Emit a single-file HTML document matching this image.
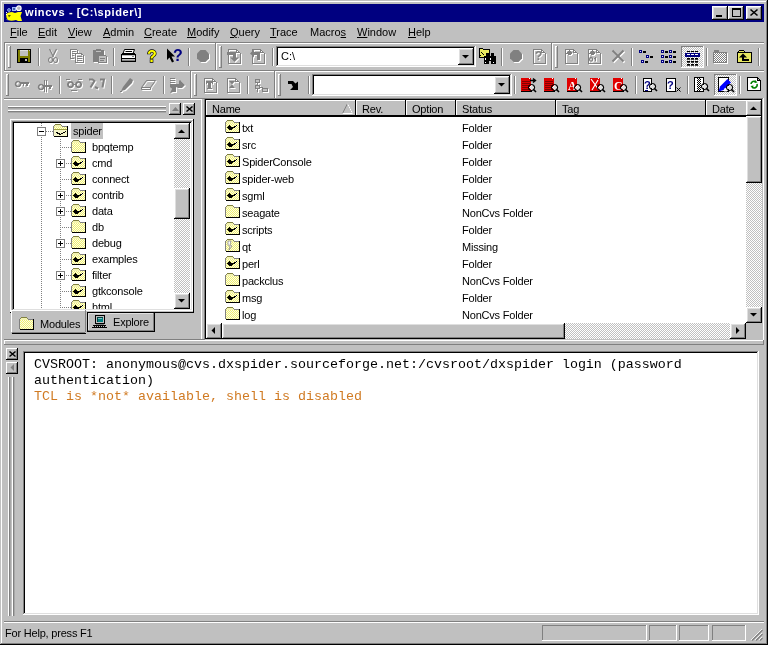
<!DOCTYPE html><html><head><meta charset="utf-8"><style>
html,body{margin:0;padding:0;width:768px;height:645px;overflow:hidden;background:#c0c0c0;}
body{position:relative;will-change:transform;font-family:"Liberation Sans",sans-serif;font-size:11px;}
svg{overflow:visible}
.u{text-decoration:underline;}
</style></head><body>
<svg width="0" height="0" style="position:absolute"><defs><pattern id="dy" width="2" height="2" patternUnits="userSpaceOnUse"><rect width="2" height="2" fill="#fcfce8"/><rect width="1" height="1" fill="#f0f070"/><rect x="1" y="1" width="1" height="1" fill="#f0f070"/></pattern></defs></svg>
<div style="position:absolute;left:0px;top:0px;width:768px;height:645px;background:#000;"></div>
<div style="position:absolute;left:0px;top:0px;width:767px;height:644px;background:#c0c0c0;"></div>
<div style="position:absolute;left:1px;top:1px;width:766px;height:643px;background:#808080;"></div>
<div style="position:absolute;left:1px;top:1px;width:765px;height:642px;background:#fff;"></div>
<div style="position:absolute;left:2px;top:2px;width:764px;height:641px;background:#c0c0c0;"></div>
<div style="position:absolute;left:4px;top:4px;width:760px;height:18px;background:#000080;"></div>
<svg style="position:absolute;left:5px;top:5px" width="18" height="17" viewBox="0 0 18 17" shape-rendering="crispEdges"><g shape-rendering="geometricPrecision"><path d="M1 9 Q3 7 7 7 L10 8 L13 7 H17 L15.5 11 L17 16 H13 L11 15 Q6 16.5 3 15 Q1 13 1 9 Z" fill="#ffff00"/><path d="M1.5 7 V11 M2 14.5 L3 15.5" stroke="#fff" stroke-width="1" stroke-dasharray="1 1"/><path d="M3 10 H6 L4 12.5 Z" fill="#606000"/><circle cx="13.8" cy="3.2" r="2.3" fill="#b8b8c0" stroke="#fff" stroke-width="1.2"/><rect x="7.5" y="2.5" width="3" height="3" fill="#4060a0" stroke="#a0b8ff" stroke-width="1"/><circle cx="4" cy="5" r="1.4" fill="#3050a0" stroke="#a0b8ff" stroke-width="0.9"/></g></svg>
<div style="position:absolute;left:25px;top:6px;font-size:11px;line-height:13px;color:#fff;white-space:pre;font-weight:bold;letter-spacing:0.6px;">wincvs - [C:\spider\]</div>
<div style="position:absolute;left:712px;top:6px;width:16px;height:14px;background:#000;"></div>
<div style="position:absolute;left:712px;top:6px;width:15px;height:13px;background:#fff;"></div>
<div style="position:absolute;left:713px;top:7px;width:14px;height:12px;background:#808080;"></div>
<div style="position:absolute;left:713px;top:7px;width:13px;height:11px;background:#dfdfdf;"></div>
<div style="position:absolute;left:714px;top:8px;width:12px;height:10px;background:#c0c0c0;"></div>
<div style="position:absolute;left:728px;top:6px;width:16px;height:14px;background:#000;"></div>
<div style="position:absolute;left:728px;top:6px;width:15px;height:13px;background:#fff;"></div>
<div style="position:absolute;left:729px;top:7px;width:14px;height:12px;background:#808080;"></div>
<div style="position:absolute;left:729px;top:7px;width:13px;height:11px;background:#dfdfdf;"></div>
<div style="position:absolute;left:730px;top:8px;width:12px;height:10px;background:#c0c0c0;"></div>
<div style="position:absolute;left:746px;top:6px;width:16px;height:14px;background:#000;"></div>
<div style="position:absolute;left:746px;top:6px;width:15px;height:13px;background:#fff;"></div>
<div style="position:absolute;left:747px;top:7px;width:14px;height:12px;background:#808080;"></div>
<div style="position:absolute;left:747px;top:7px;width:13px;height:11px;background:#dfdfdf;"></div>
<div style="position:absolute;left:748px;top:8px;width:12px;height:10px;background:#c0c0c0;"></div>
<div style="position:absolute;left:716px;top:15px;width:6px;height:2px;background:#000;"></div>
<div style="position:absolute;left:732px;top:8px;width:9px;height:9px;background:#000;"></div>
<div style="position:absolute;left:733px;top:10px;width:7px;height:6px;background:#c0c0c0;"></div>
<svg style="position:absolute;left:750px;top:9px" width="8" height="7"><path d="M0.5 0.5 L7.5 6.5 M7.5 0.5 L0.5 6.5" stroke="#000" stroke-width="1.6"/></svg>
<div style="position:absolute;left:10px;top:26px;font-size:11px;line-height:13px;color:#000;white-space:pre;"><span class="u">F</span>ile</div>
<div style="position:absolute;left:38px;top:26px;font-size:11px;line-height:13px;color:#000;white-space:pre;"><span class="u">E</span>dit</div>
<div style="position:absolute;left:68px;top:26px;font-size:11px;line-height:13px;color:#000;white-space:pre;"><span class="u">V</span>iew</div>
<div style="position:absolute;left:103px;top:26px;font-size:11px;line-height:13px;color:#000;white-space:pre;"><span class="u">A</span>dmin</div>
<div style="position:absolute;left:144px;top:26px;font-size:11px;line-height:13px;color:#000;white-space:pre;"><span class="u">C</span>reate</div>
<div style="position:absolute;left:187px;top:26px;font-size:11px;line-height:13px;color:#000;white-space:pre;"><span class="u">M</span>odify</div>
<div style="position:absolute;left:230px;top:26px;font-size:11px;line-height:13px;color:#000;white-space:pre;"><span class="u">Q</span>uery</div>
<div style="position:absolute;left:270px;top:26px;font-size:11px;line-height:13px;color:#000;white-space:pre;"><span class="u">T</span>race</div>
<div style="position:absolute;left:310px;top:26px;font-size:11px;line-height:13px;color:#000;white-space:pre;">Macro<span class="u">s</span></div>
<div style="position:absolute;left:357px;top:26px;font-size:11px;line-height:13px;color:#000;white-space:pre;"><span class="u">W</span>indow</div>
<div style="position:absolute;left:408px;top:26px;font-size:11px;line-height:13px;color:#000;white-space:pre;"><span class="u">H</span>elp</div>
<div style="position:absolute;left:4px;top:42px;width:760px;height:1px;background:#808080;"></div>
<div style="position:absolute;left:4px;top:43px;width:760px;height:1px;background:#fff;"></div>
<div style="position:absolute;left:4px;top:70px;width:760px;height:1px;background:#808080;"></div>
<div style="position:absolute;left:4px;top:71px;width:760px;height:1px;background:#fff;"></div>
<div style="position:absolute;left:4px;top:98px;width:760px;height:1px;background:#808080;"></div>
<div style="position:absolute;left:215px;top:43px;width:1px;height:27px;background:#808080;"></div>
<div style="position:absolute;left:216px;top:43px;width:1px;height:27px;background:#fff;"></div>
<div style="position:absolute;left:551px;top:43px;width:1px;height:27px;background:#808080;"></div>
<div style="position:absolute;left:552px;top:43px;width:1px;height:27px;background:#fff;"></div>
<div style="position:absolute;left:4px;top:43px;width:1px;height:27px;background:#808080;"></div>
<div style="position:absolute;left:5px;top:43px;width:1px;height:27px;background:#fff;"></div>
<div style="position:absolute;left:190px;top:71px;width:1px;height:27px;background:#808080;"></div>
<div style="position:absolute;left:191px;top:71px;width:1px;height:27px;background:#fff;"></div>
<div style="position:absolute;left:274px;top:71px;width:1px;height:27px;background:#808080;"></div>
<div style="position:absolute;left:275px;top:71px;width:1px;height:27px;background:#fff;"></div>
<div style="position:absolute;left:8px;top:46px;width:3px;height:22px;background:#808080;"></div>
<div style="position:absolute;left:8px;top:46px;width:2px;height:21px;background:#fff;"></div>
<div style="position:absolute;left:9px;top:47px;width:1px;height:20px;background:#c0c0c0;"></div>
<div style="position:absolute;left:219px;top:46px;width:3px;height:22px;background:#808080;"></div>
<div style="position:absolute;left:219px;top:46px;width:2px;height:21px;background:#fff;"></div>
<div style="position:absolute;left:220px;top:47px;width:1px;height:20px;background:#c0c0c0;"></div>
<div style="position:absolute;left:555px;top:46px;width:3px;height:22px;background:#808080;"></div>
<div style="position:absolute;left:555px;top:46px;width:2px;height:21px;background:#fff;"></div>
<div style="position:absolute;left:556px;top:47px;width:1px;height:20px;background:#c0c0c0;"></div>
<div style="position:absolute;left:6px;top:74px;width:3px;height:22px;background:#808080;"></div>
<div style="position:absolute;left:6px;top:74px;width:2px;height:21px;background:#fff;"></div>
<div style="position:absolute;left:7px;top:75px;width:1px;height:20px;background:#c0c0c0;"></div>
<div style="position:absolute;left:194px;top:74px;width:3px;height:22px;background:#808080;"></div>
<div style="position:absolute;left:194px;top:74px;width:2px;height:21px;background:#fff;"></div>
<div style="position:absolute;left:195px;top:75px;width:1px;height:20px;background:#c0c0c0;"></div>
<div style="position:absolute;left:278px;top:74px;width:3px;height:22px;background:#808080;"></div>
<div style="position:absolute;left:278px;top:74px;width:2px;height:21px;background:#fff;"></div>
<div style="position:absolute;left:279px;top:75px;width:1px;height:20px;background:#c0c0c0;"></div>
<div style="position:absolute;left:38px;top:48px;width:1px;height:18px;background:#808080;"></div>
<div style="position:absolute;left:39px;top:48px;width:1px;height:18px;background:#fff;"></div>
<div style="position:absolute;left:113px;top:48px;width:1px;height:18px;background:#808080;"></div>
<div style="position:absolute;left:114px;top:48px;width:1px;height:18px;background:#fff;"></div>
<div style="position:absolute;left:188px;top:48px;width:1px;height:18px;background:#808080;"></div>
<div style="position:absolute;left:189px;top:48px;width:1px;height:18px;background:#fff;"></div>
<div style="position:absolute;left:501px;top:48px;width:1px;height:18px;background:#808080;"></div>
<div style="position:absolute;left:502px;top:48px;width:1px;height:18px;background:#fff;"></div>
<div style="position:absolute;left:631px;top:48px;width:1px;height:18px;background:#808080;"></div>
<div style="position:absolute;left:632px;top:48px;width:1px;height:18px;background:#fff;"></div>
<div style="position:absolute;left:706px;top:48px;width:1px;height:18px;background:#808080;"></div>
<div style="position:absolute;left:707px;top:48px;width:1px;height:18px;background:#fff;"></div>
<div style="position:absolute;left:758px;top:48px;width:1px;height:18px;background:#808080;"></div>
<div style="position:absolute;left:759px;top:48px;width:1px;height:18px;background:#fff;"></div>
<div style="position:absolute;left:59px;top:76px;width:1px;height:18px;background:#808080;"></div>
<div style="position:absolute;left:60px;top:76px;width:1px;height:18px;background:#fff;"></div>
<div style="position:absolute;left:111px;top:76px;width:1px;height:18px;background:#808080;"></div>
<div style="position:absolute;left:112px;top:76px;width:1px;height:18px;background:#fff;"></div>
<div style="position:absolute;left:163px;top:76px;width:1px;height:18px;background:#808080;"></div>
<div style="position:absolute;left:164px;top:76px;width:1px;height:18px;background:#fff;"></div>
<div style="position:absolute;left:247px;top:76px;width:1px;height:18px;background:#808080;"></div>
<div style="position:absolute;left:248px;top:76px;width:1px;height:18px;background:#fff;"></div>
<div style="position:absolute;left:308px;top:76px;width:1px;height:18px;background:#808080;"></div>
<div style="position:absolute;left:309px;top:76px;width:1px;height:18px;background:#fff;"></div>
<div style="position:absolute;left:514px;top:76px;width:1px;height:18px;background:#808080;"></div>
<div style="position:absolute;left:515px;top:76px;width:1px;height:18px;background:#fff;"></div>
<div style="position:absolute;left:635px;top:76px;width:1px;height:18px;background:#808080;"></div>
<div style="position:absolute;left:636px;top:76px;width:1px;height:18px;background:#fff;"></div>
<div style="position:absolute;left:687px;top:76px;width:1px;height:18px;background:#808080;"></div>
<div style="position:absolute;left:688px;top:76px;width:1px;height:18px;background:#fff;"></div>
<div style="position:absolute;left:739px;top:76px;width:1px;height:18px;background:#808080;"></div>
<div style="position:absolute;left:740px;top:76px;width:1px;height:18px;background:#fff;"></div>
<div style="position:absolute;left:272px;top:48px;width:1px;height:18px;background:#808080;"></div>
<div style="position:absolute;left:273px;top:48px;width:1px;height:18px;background:#fff;"></div>
<div style="position:absolute;left:276px;top:46px;width:200px;height:21px;background:#fff;"></div>
<div style="position:absolute;left:276px;top:46px;width:199px;height:20px;background:#808080;"></div>
<div style="position:absolute;left:277px;top:47px;width:198px;height:19px;background:#dfdfdf;"></div>
<div style="position:absolute;left:277px;top:47px;width:197px;height:18px;background:#000;"></div>
<div style="position:absolute;left:278px;top:48px;width:196px;height:17px;background:#fff;"></div>
<div style="position:absolute;left:281px;top:50px;font-size:11px;line-height:13px;color:#000;white-space:pre;">C:\</div>
<div style="position:absolute;left:458px;top:48px;width:16px;height:17px;background:#000;"></div>
<div style="position:absolute;left:458px;top:48px;width:15px;height:16px;background:#fff;"></div>
<div style="position:absolute;left:459px;top:49px;width:14px;height:15px;background:#808080;"></div>
<div style="position:absolute;left:459px;top:49px;width:13px;height:14px;background:#dfdfdf;"></div>
<div style="position:absolute;left:460px;top:50px;width:12px;height:13px;background:#c0c0c0;"></div>
<svg style="position:absolute;left:462px;top:55px" width="8" height="4"><path d="M0 0 H7 L3.5 3.5 Z" fill="#000"/></svg>
<div style="position:absolute;left:312px;top:74px;width:200px;height:22px;background:#fff;"></div>
<div style="position:absolute;left:312px;top:74px;width:199px;height:21px;background:#808080;"></div>
<div style="position:absolute;left:313px;top:75px;width:198px;height:20px;background:#dfdfdf;"></div>
<div style="position:absolute;left:313px;top:75px;width:197px;height:19px;background:#000;"></div>
<div style="position:absolute;left:314px;top:76px;width:196px;height:18px;background:#fff;"></div>
<div style="position:absolute;left:494px;top:76px;width:16px;height:18px;background:#000;"></div>
<div style="position:absolute;left:494px;top:76px;width:15px;height:17px;background:#fff;"></div>
<div style="position:absolute;left:495px;top:77px;width:14px;height:16px;background:#808080;"></div>
<div style="position:absolute;left:495px;top:77px;width:13px;height:15px;background:#dfdfdf;"></div>
<div style="position:absolute;left:496px;top:78px;width:12px;height:14px;background:#c0c0c0;"></div>
<svg style="position:absolute;left:498px;top:83px" width="8" height="4"><path d="M0 0 H7 L3.5 3.5 Z" fill="#000"/></svg>
<div style="position:absolute;left:681px;top:46px;width:23px;height:22px;background:#fff;"></div>
<div style="position:absolute;left:681px;top:46px;width:22px;height:21px;background:#808080;"></div>
<div style="position:absolute;left:682px;top:47px;width:21px;height:20px;background:repeating-conic-gradient(#fff 0 25%,#c0c0c0 0 50%) 0 0/2px 2px;"></div>
<div style="position:absolute;left:714px;top:74px;width:23px;height:22px;background:#fff;"></div>
<div style="position:absolute;left:714px;top:74px;width:22px;height:21px;background:#808080;"></div>
<div style="position:absolute;left:715px;top:75px;width:21px;height:20px;background:repeating-conic-gradient(#fff 0 25%,#c0c0c0 0 50%) 0 0/2px 2px;"></div>
<svg style="position:absolute;left:16px;top:48px" width="16" height="16" viewBox="0 0 16 16" shape-rendering="crispEdges"><rect x="1" y="1" width="14" height="14" fill="#000"/><rect x="2" y="2" width="12" height="12" fill="#808000"/><rect x="4" y="2" width="8" height="6" fill="#c0c0c0"/><rect x="4" y="2" width="8" height="1" fill="#e0e0e0"/><rect x="3" y="9" width="10" height="1" fill="#808000"/><rect x="4" y="10" width="8" height="4" fill="#000"/><rect x="9" y="11" width="2" height="2" fill="#c0c0c0"/><rect x="13" y="2" width="1" height="1" fill="#c0c0c0"/></svg>
<svg style="position:absolute;left:46px;top:48px" width="16" height="16" viewBox="0 0 16 16" shape-rendering="crispEdges"><g transform="translate(1,1)" style="filter:none"><path d="M3.5 1 L7.5 9 M10.5 1 L6.5 9" fill="none" stroke="#fff" stroke-width="1.2" shape-rendering="geometricPrecision"/><path d="M4.5 9.5 a2 2.5 0 1 0 0.1 0 M9.5 9.5 a2 2.5 0 1 0 0.1 0" fill="none" stroke="#fff" stroke-width="1.1" shape-rendering="geometricPrecision"/></g><path d="M3.5 1 L7.5 9 M10.5 1 L6.5 9" fill="none" stroke="#808080" stroke-width="1.2" shape-rendering="geometricPrecision"/><path d="M4.5 9.5 a2 2.5 0 1 0 0.1 0 M9.5 9.5 a2 2.5 0 1 0 0.1 0" fill="none" stroke="#808080" stroke-width="1.1" shape-rendering="geometricPrecision"/></svg>
<svg style="position:absolute;left:69px;top:48px" width="16" height="16" viewBox="0 0 16 16" shape-rendering="crispEdges"><g transform="translate(1,1)" style="filter:none"><rect x="1" y="1" width="7" height="1" fill="#fff"/><rect x="1" y="1" width="1" height="9" fill="#fff"/><rect x="1" y="10" width="4" height="1" fill="#fff"/><rect x="8" y="2" width="1" height="3" fill="#fff"/><rect x="3" y="3" width="4" height="1" fill="#fff"/><rect x="3" y="5" width="4" height="1" fill="#fff"/><rect x="3" y="7" width="2" height="1" fill="#fff"/><rect x="6" y="5" width="6" height="1" fill="#fff"/><rect x="6" y="5" width="1" height="10" fill="#fff"/><rect x="6" y="14" width="9" height="1" fill="#fff"/><rect x="14" y="7" width="1" height="8" fill="#fff"/><rect x="12" y="5" width="1" height="2" fill="#fff"/><rect x="13" y="6" width="1" height="1" fill="#fff"/><rect x="8" y="8" width="5" height="1" fill="#fff"/><rect x="8" y="10" width="5" height="1" fill="#fff"/><rect x="8" y="12" width="5" height="1" fill="#fff"/></g><rect x="1" y="1" width="7" height="1" fill="#808080"/><rect x="1" y="1" width="1" height="9" fill="#808080"/><rect x="1" y="10" width="4" height="1" fill="#808080"/><rect x="8" y="2" width="1" height="3" fill="#808080"/><rect x="3" y="3" width="4" height="1" fill="#808080"/><rect x="3" y="5" width="4" height="1" fill="#808080"/><rect x="3" y="7" width="2" height="1" fill="#808080"/><rect x="6" y="5" width="6" height="1" fill="#808080"/><rect x="6" y="5" width="1" height="10" fill="#808080"/><rect x="6" y="14" width="9" height="1" fill="#808080"/><rect x="14" y="7" width="1" height="8" fill="#808080"/><rect x="12" y="5" width="1" height="2" fill="#808080"/><rect x="13" y="6" width="1" height="1" fill="#808080"/><rect x="8" y="8" width="5" height="1" fill="#808080"/><rect x="8" y="10" width="5" height="1" fill="#808080"/><rect x="8" y="12" width="5" height="1" fill="#808080"/></svg>
<svg style="position:absolute;left:92px;top:48px" width="16" height="16" viewBox="0 0 16 16" shape-rendering="crispEdges"><g transform="translate(1,1)" style="filter:none"><rect x="1" y="2" width="11" height="12" fill="#fff"/><rect x="4" y="1" width="5" height="2" fill="#fff"/><rect x="4" y="3" width="5" height="1" fill="#c0c0c0"/><rect x="6" y="7" width="8" height="1" fill="#fff"/><rect x="6" y="7" width="1" height="8" fill="#fff"/><rect x="6" y="14" width="9" height="1" fill="#fff"/><rect x="14" y="8" width="1" height="7" fill="#fff"/><rect x="7" y="8" width="7" height="6" fill="#c0c0c0"/><rect x="8" y="10" width="5" height="1" fill="#fff"/><rect x="8" y="12" width="4" height="1" fill="#fff"/></g><rect x="1" y="2" width="11" height="12" fill="#808080"/><rect x="4" y="1" width="5" height="2" fill="#808080"/><rect x="4" y="3" width="5" height="1" fill="#c0c0c0"/><rect x="6" y="7" width="8" height="1" fill="#808080"/><rect x="6" y="7" width="1" height="8" fill="#808080"/><rect x="6" y="14" width="9" height="1" fill="#808080"/><rect x="14" y="8" width="1" height="7" fill="#808080"/><rect x="7" y="8" width="7" height="6" fill="#c0c0c0"/><rect x="8" y="10" width="5" height="1" fill="#808080"/><rect x="8" y="12" width="4" height="1" fill="#808080"/></svg>
<svg style="position:absolute;left:120px;top:48px" width="16" height="16" viewBox="0 0 16 16" shape-rendering="crispEdges"><path d="M4.5 1.5 H14.5 L13 5.5 H3 Z" fill="#fff" shape-rendering="geometricPrecision"/><path d="M4.5 1.5 H14.5 L13 5.5 H3 Z" fill="none" stroke="#000" stroke-width="1" shape-rendering="geometricPrecision"/><path d="M5.5 3.5 H12" fill="none" stroke="#000" stroke-width="1" shape-rendering="geometricPrecision"/><rect x="1" y="6" width="15" height="8" fill="#000"/><rect x="2" y="5" width="13" height="1" fill="#000"/><rect x="2" y="7" width="13" height="1" fill="#c0c0c0"/><rect x="2" y="8" width="13" height="2" fill="#fff"/><rect x="3" y="10" width="11" height="1" fill="#000"/><rect x="2" y="11" width="13" height="1" fill="#c0c0c0"/><rect x="2" y="12" width="13" height="1" fill="#808080"/><rect x="12" y="8" width="2" height="1" fill="#808080"/></svg>
<svg style="position:absolute;left:144px;top:48px" width="16" height="16" viewBox="0 0 16 16" shape-rendering="crispEdges"><text x="3" y="14" font-family="Liberation Sans" font-weight="bold" font-size="16" fill="#ffff00" stroke="#000" stroke-width="1.3" paint-order="stroke" shape-rendering="geometricPrecision">?</text></svg>
<svg style="position:absolute;left:166px;top:48px" width="18" height="16" viewBox="0 0 18 16" shape-rendering="crispEdges"><path d="M1 0.5 L1 12 L3.5 9.5 L6 14.5 L8 13.5 L5.5 8.5 L9 8.5 Z" fill="#000" shape-rendering="geometricPrecision"/><text x="7" y="13" font-family="Liberation Sans" font-weight="bold" font-size="16" fill="#000080"  shape-rendering="geometricPrecision">?</text></svg>
<svg style="position:absolute;left:196px;top:49px" width="16" height="16" viewBox="0 0 16 16" shape-rendering="crispEdges"><path d="M5.5 2 H10.5 L14 5.5 V10.5 L10.5 14 H5.5 L2 10.5 V5.5 Z" fill="#fff" shape-rendering="geometricPrecision"/><path d="M4.5 1 H9.5 L13 4.5 V9.5 L9.5 13 H4.5 L1 9.5 V4.5 Z" fill="#808080" shape-rendering="geometricPrecision"/></svg>
<svg style="position:absolute;left:226px;top:48px" width="16" height="16" viewBox="0 0 16 16" shape-rendering="crispEdges"><g transform="translate(1,1)" style="filter:none"><rect x="2" y="1" width="9" height="1" fill="#fff"/><rect x="2" y="1" width="1" height="15" fill="#fff"/><rect x="2" y="15" width="13" height="1" fill="#fff"/><rect x="14" y="5" width="1" height="11" fill="#fff"/><rect x="10" y="1" width="1" height="4" fill="#fff"/><rect x="10" y="4" width="4" height="1" fill="#fff"/><rect x="11" y="2" width="1" height="1" fill="#fff"/><rect x="12" y="3" width="1" height="1" fill="#fff"/><rect x="13" y="4" width="1" height="1" fill="#fff"/><rect x="1" y="4" width="9" height="3" fill="#fff"/><rect x="7" y="4" width="3" height="6" fill="#fff"/><path d="M4 9.5 H13 L8.5 14 Z" fill="#fff" shape-rendering="geometricPrecision"/></g><rect x="2" y="1" width="9" height="1" fill="#808080"/><rect x="2" y="1" width="1" height="15" fill="#808080"/><rect x="2" y="15" width="13" height="1" fill="#808080"/><rect x="14" y="5" width="1" height="11" fill="#808080"/><rect x="10" y="1" width="1" height="4" fill="#808080"/><rect x="10" y="4" width="4" height="1" fill="#808080"/><rect x="11" y="2" width="1" height="1" fill="#808080"/><rect x="12" y="3" width="1" height="1" fill="#808080"/><rect x="13" y="4" width="1" height="1" fill="#808080"/><rect x="1" y="4" width="9" height="3" fill="#808080"/><rect x="7" y="4" width="3" height="6" fill="#808080"/><path d="M4 9.5 H13 L8.5 14 Z" fill="#808080" shape-rendering="geometricPrecision"/></svg>
<svg style="position:absolute;left:250px;top:48px" width="16" height="16" viewBox="0 0 16 16" shape-rendering="crispEdges"><g transform="translate(1,1)" style="filter:none"><rect x="2" y="1" width="9" height="1" fill="#fff"/><rect x="2" y="1" width="1" height="15" fill="#fff"/><rect x="2" y="15" width="13" height="1" fill="#fff"/><rect x="14" y="5" width="1" height="11" fill="#fff"/><rect x="10" y="1" width="1" height="4" fill="#fff"/><rect x="10" y="4" width="4" height="1" fill="#fff"/><rect x="11" y="2" width="1" height="1" fill="#fff"/><rect x="12" y="3" width="1" height="1" fill="#fff"/><rect x="13" y="4" width="1" height="1" fill="#fff"/><rect x="3" y="4" width="7" height="3" fill="#fff"/><rect x="7" y="4" width="3" height="8" fill="#fff"/><path d="M0 5.5 L4 1.5 V9.5 Z" fill="#fff" shape-rendering="geometricPrecision"/></g><rect x="2" y="1" width="9" height="1" fill="#808080"/><rect x="2" y="1" width="1" height="15" fill="#808080"/><rect x="2" y="15" width="13" height="1" fill="#808080"/><rect x="14" y="5" width="1" height="11" fill="#808080"/><rect x="10" y="1" width="1" height="4" fill="#808080"/><rect x="10" y="4" width="4" height="1" fill="#808080"/><rect x="11" y="2" width="1" height="1" fill="#808080"/><rect x="12" y="3" width="1" height="1" fill="#808080"/><rect x="13" y="4" width="1" height="1" fill="#808080"/><rect x="3" y="4" width="7" height="3" fill="#808080"/><rect x="7" y="4" width="3" height="8" fill="#808080"/><path d="M0 5.5 L4 1.5 V9.5 Z" fill="#808080" shape-rendering="geometricPrecision"/></svg>
<svg style="position:absolute;left:479px;top:48px" width="17" height="16" viewBox="0 0 17 16" shape-rendering="crispEdges"><rect x="0" y="1" width="11" height="9" fill="#000"/><rect x="0" y="0" width="4" height="1" fill="#000"/><rect x="1" y="2" width="9" height="7" fill="#e8e860"/><rect x="1" y="1" width="3" height="1" fill="#e8e860"/><rect x="2" y="4" width="1" height="1" fill="#000"/><rect x="3" y="5" width="1" height="1" fill="#000"/><rect x="4" y="6" width="1" height="1" fill="#000"/><rect x="1" y="7" width="1" height="1" fill="#000"/><rect x="7" y="5" width="3" height="4" fill="#000"/><rect x="12" y="5" width="3" height="4" fill="#000"/><rect x="5" y="8" width="12" height="8" fill="#000"/><rect x="10" y="13" width="2" height="3" fill="#c0c0c0"/><rect x="6" y="10" width="1" height="2" fill="#fff"/><rect x="11" y="10" width="1" height="2" fill="#fff"/><rect x="6" y="14" width="1" height="1" fill="#fff"/><rect x="14" y="14" width="1" height="1" fill="#fff"/></svg>
<svg style="position:absolute;left:509px;top:49px" width="16" height="16" viewBox="0 0 16 16" shape-rendering="crispEdges"><path d="M5.5 2 H10.5 L14 5.5 V10.5 L10.5 14 H5.5 L2 10.5 V5.5 Z" fill="#fff" shape-rendering="geometricPrecision"/><path d="M4.5 1 H9.5 L13 4.5 V9.5 L9.5 13 H4.5 L1 9.5 V4.5 Z" fill="#808080" shape-rendering="geometricPrecision"/></svg>
<svg style="position:absolute;left:531px;top:48px" width="16" height="16" viewBox="0 0 16 16" shape-rendering="crispEdges"><g transform="translate(1,1)" style="filter:none"><rect x="2" y="1" width="9" height="1" fill="#fff"/><rect x="2" y="1" width="1" height="15" fill="#fff"/><rect x="2" y="15" width="13" height="1" fill="#fff"/><rect x="14" y="5" width="1" height="11" fill="#fff"/><rect x="10" y="1" width="1" height="4" fill="#fff"/><rect x="10" y="4" width="4" height="1" fill="#fff"/><rect x="11" y="2" width="1" height="1" fill="#fff"/><rect x="12" y="3" width="1" height="1" fill="#fff"/><rect x="13" y="4" width="1" height="1" fill="#fff"/><text x="4" y="12" font-family="Liberation Sans" font-weight="bold" font-size="12" fill="#fff"  shape-rendering="geometricPrecision">?</text></g><rect x="2" y="1" width="9" height="1" fill="#808080"/><rect x="2" y="1" width="1" height="15" fill="#808080"/><rect x="2" y="15" width="13" height="1" fill="#808080"/><rect x="14" y="5" width="1" height="11" fill="#808080"/><rect x="10" y="1" width="1" height="4" fill="#808080"/><rect x="10" y="4" width="4" height="1" fill="#808080"/><rect x="11" y="2" width="1" height="1" fill="#808080"/><rect x="12" y="3" width="1" height="1" fill="#808080"/><rect x="13" y="4" width="1" height="1" fill="#808080"/><text x="4" y="12" font-family="Liberation Sans" font-weight="bold" font-size="12" fill="#808080"  shape-rendering="geometricPrecision">?</text></svg>
<svg style="position:absolute;left:563px;top:48px" width="16" height="16" viewBox="0 0 16 16" shape-rendering="crispEdges"><g transform="translate(1,1)" style="filter:none"><rect x="2" y="1" width="9" height="1" fill="#fff"/><rect x="2" y="1" width="1" height="15" fill="#fff"/><rect x="2" y="15" width="13" height="1" fill="#fff"/><rect x="14" y="5" width="1" height="11" fill="#fff"/><rect x="10" y="1" width="1" height="4" fill="#fff"/><rect x="10" y="4" width="4" height="1" fill="#fff"/><rect x="11" y="2" width="1" height="1" fill="#fff"/><rect x="12" y="3" width="1" height="1" fill="#fff"/><rect x="13" y="4" width="1" height="1" fill="#fff"/><rect x="4" y="4" width="5" height="2" fill="#fff"/><rect x="5" y="3" width="3" height="4" fill="#fff"/><rect x="6" y="2" width="1" height="1" fill="#fff"/><rect x="3" y="5" width="1" height="1" fill="#fff"/></g><rect x="2" y="1" width="9" height="1" fill="#808080"/><rect x="2" y="1" width="1" height="15" fill="#808080"/><rect x="2" y="15" width="13" height="1" fill="#808080"/><rect x="14" y="5" width="1" height="11" fill="#808080"/><rect x="10" y="1" width="1" height="4" fill="#808080"/><rect x="10" y="4" width="4" height="1" fill="#808080"/><rect x="11" y="2" width="1" height="1" fill="#808080"/><rect x="12" y="3" width="1" height="1" fill="#808080"/><rect x="13" y="4" width="1" height="1" fill="#808080"/><rect x="4" y="4" width="5" height="2" fill="#808080"/><rect x="5" y="3" width="3" height="4" fill="#808080"/><rect x="6" y="2" width="1" height="1" fill="#808080"/><rect x="3" y="5" width="1" height="1" fill="#808080"/></svg>
<svg style="position:absolute;left:586px;top:48px" width="16" height="16" viewBox="0 0 16 16" shape-rendering="crispEdges"><g transform="translate(1,1)" style="filter:none"><rect x="2" y="1" width="9" height="1" fill="#fff"/><rect x="2" y="1" width="1" height="15" fill="#fff"/><rect x="2" y="15" width="13" height="1" fill="#fff"/><rect x="14" y="5" width="1" height="11" fill="#fff"/><rect x="10" y="1" width="1" height="4" fill="#fff"/><rect x="10" y="4" width="4" height="1" fill="#fff"/><rect x="11" y="2" width="1" height="1" fill="#fff"/><rect x="12" y="3" width="1" height="1" fill="#fff"/><rect x="13" y="4" width="1" height="1" fill="#fff"/><rect x="4" y="4" width="5" height="2" fill="#fff"/><rect x="5" y="3" width="3" height="4" fill="#fff"/><rect x="6" y="2" width="1" height="1" fill="#fff"/><rect x="3" y="5" width="1" height="1" fill="#fff"/><path d="M5 9.5 a1.5 1.8 0 1 0 0.1 0" fill="none" stroke="#fff" stroke-width="1.3" shape-rendering="geometricPrecision"/><rect x="9" y="9" width="1" height="4" fill="#fff"/><rect x="8" y="10" width="1" height="1" fill="#fff"/></g><rect x="2" y="1" width="9" height="1" fill="#808080"/><rect x="2" y="1" width="1" height="15" fill="#808080"/><rect x="2" y="15" width="13" height="1" fill="#808080"/><rect x="14" y="5" width="1" height="11" fill="#808080"/><rect x="10" y="1" width="1" height="4" fill="#808080"/><rect x="10" y="4" width="4" height="1" fill="#808080"/><rect x="11" y="2" width="1" height="1" fill="#808080"/><rect x="12" y="3" width="1" height="1" fill="#808080"/><rect x="13" y="4" width="1" height="1" fill="#808080"/><rect x="4" y="4" width="5" height="2" fill="#808080"/><rect x="5" y="3" width="3" height="4" fill="#808080"/><rect x="6" y="2" width="1" height="1" fill="#808080"/><rect x="3" y="5" width="1" height="1" fill="#808080"/><path d="M5 9.5 a1.5 1.8 0 1 0 0.1 0" fill="none" stroke="#808080" stroke-width="1.3" shape-rendering="geometricPrecision"/><rect x="9" y="9" width="1" height="4" fill="#808080"/><rect x="8" y="10" width="1" height="1" fill="#808080"/></svg>
<svg style="position:absolute;left:611px;top:49px" width="16" height="16" viewBox="0 0 16 16" shape-rendering="crispEdges"><g transform="translate(1,1)" style="filter:none"><path d="M1.5 1.5 L12.5 12.5 M12.5 1.5 L1.5 12.5" fill="none" stroke="#fff" stroke-width="2" shape-rendering="geometricPrecision"/></g><path d="M1.5 1.5 L12.5 12.5 M12.5 1.5 L1.5 12.5" fill="none" stroke="#808080" stroke-width="2" shape-rendering="geometricPrecision"/></svg>
<svg style="position:absolute;left:639px;top:50px" width="16" height="16" viewBox="0 0 16 16" shape-rendering="crispEdges"><rect x="0" y="0" width="3" height="3" fill="#000080"/><rect x="1" y="1" width="1" height="1" fill="#e0e0ff"/><rect x="4" y="1" width="3" height="2" fill="#000"/><rect x="7" y="5" width="3" height="3" fill="#000080"/><rect x="8" y="6" width="1" height="1" fill="#e0e0ff"/><rect x="11" y="6" width="3" height="2" fill="#000"/><rect x="2" y="10" width="3" height="3" fill="#000080"/><rect x="3" y="11" width="1" height="1" fill="#e0e0ff"/><rect x="6" y="11" width="3" height="2" fill="#000"/></svg>
<svg style="position:absolute;left:661px;top:50px" width="16" height="16" viewBox="0 0 16 16" shape-rendering="crispEdges"><rect x="0" y="0" width="3" height="3" fill="#000080"/><rect x="1" y="1" width="1" height="1" fill="#e0e0ff"/><rect x="4" y="1" width="3" height="2" fill="#000"/><rect x="8" y="0" width="3" height="3" fill="#000080"/><rect x="9" y="1" width="1" height="1" fill="#e0e0ff"/><rect x="12" y="1" width="3" height="2" fill="#000"/><rect x="0" y="5" width="3" height="3" fill="#000080"/><rect x="1" y="6" width="1" height="1" fill="#e0e0ff"/><rect x="4" y="6" width="3" height="2" fill="#000"/><rect x="8" y="5" width="3" height="3" fill="#000080"/><rect x="9" y="6" width="1" height="1" fill="#e0e0ff"/><rect x="12" y="6" width="3" height="2" fill="#000"/><rect x="0" y="10" width="3" height="3" fill="#000080"/><rect x="1" y="11" width="1" height="1" fill="#e0e0ff"/><rect x="4" y="11" width="3" height="2" fill="#000"/><rect x="8" y="10" width="3" height="3" fill="#000080"/><rect x="9" y="11" width="1" height="1" fill="#e0e0ff"/><rect x="12" y="11" width="3" height="2" fill="#000"/></svg>
<svg style="position:absolute;left:685px;top:51px" width="16" height="16" viewBox="0 0 16 16" shape-rendering="crispEdges"><rect x="2" y="0" width="3" height="1" fill="#000"/><rect x="6" y="0" width="3" height="1" fill="#000"/><rect x="10" y="0" width="3" height="1" fill="#000"/><rect x="0" y="2" width="15" height="4" fill="#000080"/><rect x="2" y="3" width="3" height="1" fill="#fff"/><rect x="6" y="3" width="3" height="1" fill="#fff"/><rect x="10" y="3" width="3" height="1" fill="#fff"/><rect x="2" y="7" width="3" height="1" fill="#000"/><rect x="6" y="7" width="3" height="1" fill="#000"/><rect x="10" y="7" width="3" height="1" fill="#000"/><rect x="2" y="10" width="3" height="1" fill="#000"/><rect x="6" y="10" width="3" height="1" fill="#000"/><rect x="10" y="10" width="3" height="1" fill="#000"/><rect x="2" y="13" width="3" height="1" fill="#000"/><rect x="6" y="13" width="3" height="1" fill="#000"/><rect x="10" y="13" width="3" height="1" fill="#000"/><rect x="2" y="8" width="3" height="1" fill="#404040"/><rect x="6" y="8" width="3" height="1" fill="#404040"/><rect x="10" y="8" width="3" height="1" fill="#404040"/><rect x="2" y="11" width="3" height="1" fill="#404040"/><rect x="6" y="11" width="3" height="1" fill="#404040"/><rect x="10" y="11" width="3" height="1" fill="#404040"/><rect x="2" y="14" width="3" height="1" fill="#404040"/><rect x="6" y="14" width="3" height="1" fill="#404040"/><rect x="10" y="14" width="3" height="1" fill="#404040"/></svg>
<svg style="position:absolute;left:713px;top:50px" width="16" height="16" viewBox="0 0 16 16" shape-rendering="crispEdges"><rect x="1" y="0" width="5" height="2" fill="#808080"/><rect x="0" y="2" width="14" height="11" fill="#808080"/><rect x="1" y="3" width="1" height="1" fill="#fff"/><rect x="1" y="5" width="1" height="1" fill="#fff"/><rect x="1" y="7" width="1" height="1" fill="#fff"/><rect x="1" y="9" width="1" height="1" fill="#fff"/><rect x="1" y="11" width="1" height="1" fill="#fff"/><rect x="2" y="4" width="1" height="1" fill="#fff"/><rect x="2" y="6" width="1" height="1" fill="#fff"/><rect x="2" y="8" width="1" height="1" fill="#fff"/><rect x="2" y="10" width="1" height="1" fill="#fff"/><rect x="3" y="3" width="1" height="1" fill="#fff"/><rect x="3" y="5" width="1" height="1" fill="#fff"/><rect x="3" y="7" width="1" height="1" fill="#fff"/><rect x="3" y="9" width="1" height="1" fill="#fff"/><rect x="3" y="11" width="1" height="1" fill="#fff"/><rect x="4" y="4" width="1" height="1" fill="#fff"/><rect x="4" y="6" width="1" height="1" fill="#fff"/><rect x="4" y="8" width="1" height="1" fill="#fff"/><rect x="4" y="10" width="1" height="1" fill="#fff"/><rect x="5" y="3" width="1" height="1" fill="#fff"/><rect x="5" y="5" width="1" height="1" fill="#fff"/><rect x="5" y="7" width="1" height="1" fill="#fff"/><rect x="5" y="9" width="1" height="1" fill="#fff"/><rect x="5" y="11" width="1" height="1" fill="#fff"/><rect x="6" y="4" width="1" height="1" fill="#fff"/><rect x="6" y="6" width="1" height="1" fill="#fff"/><rect x="6" y="8" width="1" height="1" fill="#fff"/><rect x="6" y="10" width="1" height="1" fill="#fff"/><rect x="7" y="3" width="1" height="1" fill="#fff"/><rect x="7" y="5" width="1" height="1" fill="#fff"/><rect x="7" y="7" width="1" height="1" fill="#fff"/><rect x="7" y="9" width="1" height="1" fill="#fff"/><rect x="7" y="11" width="1" height="1" fill="#fff"/><rect x="8" y="4" width="1" height="1" fill="#fff"/><rect x="8" y="6" width="1" height="1" fill="#fff"/><rect x="8" y="8" width="1" height="1" fill="#fff"/><rect x="8" y="10" width="1" height="1" fill="#fff"/><rect x="9" y="3" width="1" height="1" fill="#fff"/><rect x="9" y="5" width="1" height="1" fill="#fff"/><rect x="9" y="7" width="1" height="1" fill="#fff"/><rect x="9" y="9" width="1" height="1" fill="#fff"/><rect x="9" y="11" width="1" height="1" fill="#fff"/><rect x="10" y="4" width="1" height="1" fill="#fff"/><rect x="10" y="6" width="1" height="1" fill="#fff"/><rect x="10" y="8" width="1" height="1" fill="#fff"/><rect x="10" y="10" width="1" height="1" fill="#fff"/><rect x="11" y="3" width="1" height="1" fill="#fff"/><rect x="11" y="5" width="1" height="1" fill="#fff"/><rect x="11" y="7" width="1" height="1" fill="#fff"/><rect x="11" y="9" width="1" height="1" fill="#fff"/><rect x="11" y="11" width="1" height="1" fill="#fff"/><rect x="12" y="4" width="1" height="1" fill="#fff"/><rect x="12" y="6" width="1" height="1" fill="#fff"/><rect x="12" y="8" width="1" height="1" fill="#fff"/><rect x="12" y="10" width="1" height="1" fill="#fff"/><rect x="1" y="13" width="14" height="1" fill="#fff"/><rect x="14" y="3" width="1" height="11" fill="#fff"/></svg>
<svg style="position:absolute;left:737px;top:50px" width="16" height="16" viewBox="0 0 16 16" shape-rendering="crispEdges"><rect x="2" y="0" width="5" height="1" fill="#000"/><rect x="1" y="1" width="1" height="1" fill="#000"/><rect x="7" y="1" width="1" height="1" fill="#000"/><rect x="0" y="2" width="15" height="11" fill="#000"/><rect x="1" y="3" width="13" height="9" fill="#e8e860"/><rect x="2" y="1" width="5" height="1" fill="#e8e860"/><path d="M2 7.5 L6 3.5 L10 7.5 Z" fill="#000" shape-rendering="geometricPrecision"/><rect x="5" y="7" width="2" height="3" fill="#000"/><rect x="5" y="9" width="7" height="2" fill="#000"/></svg>
<svg style="position:absolute;left:15px;top:79px" width="16" height="16" viewBox="0 0 16 16" shape-rendering="crispEdges"><g transform="translate(1,1)" style="filter:none"><path d="M3 2.5 a2.5 2.5 0 1 0 0.1 0" fill="none" stroke="#fff" stroke-width="1.6" shape-rendering="geometricPrecision"/><rect x="5" y="3" width="9" height="2" fill="#fff"/><rect x="8" y="5" width="1" height="2" fill="#fff"/><rect x="11" y="5" width="2" height="2" fill="#fff"/></g><path d="M3 2.5 a2.5 2.5 0 1 0 0.1 0" fill="none" stroke="#808080" stroke-width="1.6" shape-rendering="geometricPrecision"/><rect x="5" y="3" width="9" height="2" fill="#808080"/><rect x="8" y="5" width="1" height="2" fill="#808080"/><rect x="11" y="5" width="2" height="2" fill="#808080"/></svg>
<svg style="position:absolute;left:38px;top:79px" width="16" height="16" viewBox="0 0 16 16" shape-rendering="crispEdges"><g transform="translate(1,1)" style="filter:none"><path d="M3 5.5 a2.5 2.5 0 1 0 0.1 0" fill="none" stroke="#fff" stroke-width="1.6" shape-rendering="geometricPrecision"/><rect x="5" y="6" width="9" height="2" fill="#fff"/><rect x="11" y="8" width="2" height="2" fill="#fff"/><rect x="6" y="1" width="1" height="12" fill="#fff"/><rect x="8" y="1" width="1" height="12" fill="#fff"/></g><path d="M3 5.5 a2.5 2.5 0 1 0 0.1 0" fill="none" stroke="#808080" stroke-width="1.6" shape-rendering="geometricPrecision"/><rect x="5" y="6" width="9" height="2" fill="#808080"/><rect x="11" y="8" width="2" height="2" fill="#808080"/><rect x="6" y="1" width="1" height="12" fill="#808080"/><rect x="8" y="1" width="1" height="12" fill="#808080"/></svg>
<svg style="position:absolute;left:66px;top:78px" width="16" height="16" viewBox="0 0 16 16" shape-rendering="crispEdges"><g transform="translate(1,1)" style="filter:none"><path d="M4.5 4 a2.6 2.6 0 1 0 0.1 0 M12.5 4 a2.6 2.6 0 1 0 0.1 0" fill="none" stroke="#fff" stroke-width="1.9" shape-rendering="geometricPrecision"/><rect x="0" y="1" width="4" height="1" fill="#fff"/><rect x="12" y="1" width="4" height="1" fill="#fff"/><rect x="5" y="12" width="6" height="1" fill="#fff"/><rect x="7" y="6" width="3" height="1" fill="#fff"/></g><path d="M4.5 4 a2.6 2.6 0 1 0 0.1 0 M12.5 4 a2.6 2.6 0 1 0 0.1 0" fill="none" stroke="#808080" stroke-width="1.9" shape-rendering="geometricPrecision"/><rect x="0" y="1" width="4" height="1" fill="#808080"/><rect x="12" y="1" width="4" height="1" fill="#808080"/><rect x="5" y="12" width="6" height="1" fill="#808080"/><rect x="7" y="6" width="3" height="1" fill="#808080"/></svg>
<svg style="position:absolute;left:89px;top:78px" width="16" height="16" viewBox="0 0 16 16" shape-rendering="crispEdges"><g transform="translate(1,1)" style="filter:none"><path d="M0 1.5 H3.5 L5.5 3 L1.5 9.5 M6 9 L9 10.5 M11 1.5 H15 L13.5 9.5" fill="none" stroke="#fff" stroke-width="2" shape-rendering="geometricPrecision"/></g><path d="M0 1.5 H3.5 L5.5 3 L1.5 9.5 M6 9 L9 10.5 M11 1.5 H15 L13.5 9.5" fill="none" stroke="#808080" stroke-width="2" shape-rendering="geometricPrecision"/></svg>
<svg style="position:absolute;left:120px;top:78px" width="16" height="16" viewBox="0 0 16 16" shape-rendering="crispEdges"><g transform="translate(1,1)" style="filter:none"><path d="M10 0 L13 2 L12 5 L5 12 L1 13 L3 9 Z" fill="#fff" shape-rendering="geometricPrecision"/><rect x="0" y="13" width="2" height="1" fill="#fff"/></g><path d="M10 0 L13 2 L12 5 L5 12 L1 13 L3 9 Z" fill="#808080" shape-rendering="geometricPrecision"/><rect x="0" y="13" width="2" height="1" fill="#808080"/></svg>
<svg style="position:absolute;left:141px;top:79px" width="16" height="16" viewBox="0 0 16 16" shape-rendering="crispEdges"><g transform="translate(1,1)" style="filter:none"><path d="M5.5 1.5 H14.5 L9.5 8.5 H0.5 Z" fill="none" stroke="#fff" stroke-width="1" shape-rendering="geometricPrecision"/><path d="M9.5 8.5 V10.5 H0.5 V8.5" fill="none" stroke="#fff" stroke-width="1" shape-rendering="geometricPrecision"/></g><path d="M5.5 1.5 H14.5 L9.5 8.5 H0.5 Z" fill="none" stroke="#808080" stroke-width="1" shape-rendering="geometricPrecision"/><path d="M9.5 8.5 V10.5 H0.5 V8.5" fill="none" stroke="#808080" stroke-width="1" shape-rendering="geometricPrecision"/></svg>
<svg style="position:absolute;left:170px;top:78px" width="16" height="16" viewBox="0 0 16 16" shape-rendering="crispEdges"><g transform="translate(1,1)" style="filter:none"><rect x="0" y="0" width="5" height="1" fill="#fff"/><rect x="0" y="2" width="5" height="1" fill="#fff"/><rect x="0" y="4" width="5" height="1" fill="#fff"/><rect x="0" y="6" width="5" height="1" fill="#fff"/><path d="M0 6 H9 V3 L10 2 L15 7 L12 10 L8 10 L6 9 V14 H3 L0 15 L2 11 L0 9 Z" fill="#fff" shape-rendering="geometricPrecision"/></g><rect x="0" y="0" width="5" height="1" fill="#808080"/><rect x="0" y="2" width="5" height="1" fill="#808080"/><rect x="0" y="4" width="5" height="1" fill="#808080"/><rect x="0" y="6" width="5" height="1" fill="#808080"/><path d="M0 6 H9 V3 L10 2 L15 7 L12 10 L8 10 L6 9 V14 H3 L0 15 L2 11 L0 9 Z" fill="#808080" shape-rendering="geometricPrecision"/></svg>
<svg style="position:absolute;left:202px;top:77px" width="16" height="16" viewBox="0 0 16 16" shape-rendering="crispEdges"><g transform="translate(1,1)" style="filter:none"><rect x="2" y="1" width="9" height="1" fill="#fff"/><rect x="2" y="1" width="1" height="15" fill="#fff"/><rect x="2" y="15" width="13" height="1" fill="#fff"/><rect x="14" y="5" width="1" height="11" fill="#fff"/><rect x="10" y="1" width="1" height="4" fill="#fff"/><rect x="10" y="4" width="4" height="1" fill="#fff"/><rect x="11" y="2" width="1" height="1" fill="#fff"/><rect x="12" y="3" width="1" height="1" fill="#fff"/><rect x="13" y="4" width="1" height="1" fill="#fff"/><rect x="4" y="4" width="7" height="2" fill="#fff"/><rect x="6" y="4" width="3" height="8" fill="#fff"/><rect x="5" y="11" width="5" height="1" fill="#fff"/><rect x="4" y="4" width="1" height="3" fill="#fff"/><rect x="10" y="4" width="1" height="3" fill="#fff"/></g><rect x="2" y="1" width="9" height="1" fill="#808080"/><rect x="2" y="1" width="1" height="15" fill="#808080"/><rect x="2" y="15" width="13" height="1" fill="#808080"/><rect x="14" y="5" width="1" height="11" fill="#808080"/><rect x="10" y="1" width="1" height="4" fill="#808080"/><rect x="10" y="4" width="4" height="1" fill="#808080"/><rect x="11" y="2" width="1" height="1" fill="#808080"/><rect x="12" y="3" width="1" height="1" fill="#808080"/><rect x="13" y="4" width="1" height="1" fill="#808080"/><rect x="4" y="4" width="7" height="2" fill="#808080"/><rect x="6" y="4" width="3" height="8" fill="#808080"/><rect x="5" y="11" width="5" height="1" fill="#808080"/><rect x="4" y="4" width="1" height="3" fill="#808080"/><rect x="10" y="4" width="1" height="3" fill="#808080"/></svg>
<svg style="position:absolute;left:225px;top:77px" width="16" height="16" viewBox="0 0 16 16" shape-rendering="crispEdges"><g transform="translate(1,1)" style="filter:none"><rect x="2" y="1" width="9" height="1" fill="#fff"/><rect x="2" y="1" width="1" height="15" fill="#fff"/><rect x="2" y="15" width="13" height="1" fill="#fff"/><rect x="14" y="5" width="1" height="11" fill="#fff"/><rect x="10" y="1" width="1" height="4" fill="#fff"/><rect x="10" y="4" width="4" height="1" fill="#fff"/><rect x="11" y="2" width="1" height="1" fill="#fff"/><rect x="12" y="3" width="1" height="1" fill="#fff"/><rect x="13" y="4" width="1" height="1" fill="#fff"/><path d="M4 4 H10 L4 11 H10 Z" fill="#fff" shape-rendering="geometricPrecision"/></g><rect x="2" y="1" width="9" height="1" fill="#808080"/><rect x="2" y="1" width="1" height="15" fill="#808080"/><rect x="2" y="15" width="13" height="1" fill="#808080"/><rect x="14" y="5" width="1" height="11" fill="#808080"/><rect x="10" y="1" width="1" height="4" fill="#808080"/><rect x="10" y="4" width="4" height="1" fill="#808080"/><rect x="11" y="2" width="1" height="1" fill="#808080"/><rect x="12" y="3" width="1" height="1" fill="#808080"/><rect x="13" y="4" width="1" height="1" fill="#808080"/><path d="M4 4 H10 L4 11 H10 Z" fill="#808080" shape-rendering="geometricPrecision"/></svg>
<svg style="position:absolute;left:254px;top:78px" width="16" height="16" viewBox="0 0 16 16" shape-rendering="crispEdges"><g transform="translate(1,1)" style="filter:none"><rect x="1" y="1" width="5" height="4" fill="#fff"/><rect x="1" y="7" width="5" height="4" fill="#fff"/><rect x="8" y="10" width="6" height="4" fill="#fff"/><rect x="2" y="2" width="3" height="2" fill="#c0c0c0"/><rect x="2" y="8" width="3" height="2" fill="#c0c0c0"/><rect x="9" y="11" width="4" height="2" fill="#c0c0c0"/><rect x="3" y="5" width="1" height="2" fill="#fff"/><rect x="3" y="11" width="1" height="3" fill="#fff"/><rect x="6" y="9" width="3" height="1" fill="#fff"/></g><rect x="1" y="1" width="5" height="4" fill="#808080"/><rect x="1" y="7" width="5" height="4" fill="#808080"/><rect x="8" y="10" width="6" height="4" fill="#808080"/><rect x="2" y="2" width="3" height="2" fill="#c0c0c0"/><rect x="2" y="8" width="3" height="2" fill="#c0c0c0"/><rect x="9" y="11" width="4" height="2" fill="#c0c0c0"/><rect x="3" y="5" width="1" height="2" fill="#808080"/><rect x="3" y="11" width="1" height="3" fill="#808080"/><rect x="6" y="9" width="3" height="1" fill="#808080"/></svg>
<svg style="position:absolute;left:288px;top:81px" width="12" height="10" viewBox="0 0 12 10" shape-rendering="crispEdges"><path d="M0 0 H5 L7.5 2.5 L10 0.5 V9 H2 L5 6 L3.5 3 H0 Z" fill="#000" shape-rendering="geometricPrecision"/></svg>
<svg style="position:absolute;left:521px;top:78px" width="17" height="16" viewBox="0 0 17 16" shape-rendering="crispEdges"><rect x="0" y="0" width="10" height="14" fill="#e00000"/><rect x="0" y="13" width="11" height="1" fill="#000"/><rect x="8" y="0" width="1" height="1" fill="#fff"/><rect x="1" y="3" width="8" height="1" fill="#800000"/><rect x="1" y="5" width="8" height="1" fill="#800000"/><rect x="1" y="7" width="8" height="1" fill="#800000"/><rect x="1" y="9" width="8" height="1" fill="#800000"/><rect x="1" y="11" width="8" height="1" fill="#800000"/><path d="M9 2.5 H14 M12 0.5 L14.5 2.5 L12 4.5" fill="none" stroke="#000" stroke-width="1.4" shape-rendering="geometricPrecision"/><path d="M10.5 6.5 a3 3 0 1 0 0.1 0" fill="none" stroke="#000" stroke-width="1.2" shape-rendering="geometricPrecision"/><circle cx="10.55" cy="9.5" r="2.2" fill="#e0e0e0"/><rect x="9" y="8" width="1" height="1" fill="#fff"/><path d="M12.5 11.5 L15 14" fill="none" stroke="#000" stroke-width="1.6" shape-rendering="geometricPrecision"/></svg>
<svg style="position:absolute;left:544px;top:78px" width="17" height="16" viewBox="0 0 17 16" shape-rendering="crispEdges"><rect x="0" y="0" width="10" height="14" fill="#e00000"/><rect x="0" y="13" width="11" height="1" fill="#000"/><rect x="8" y="0" width="1" height="1" fill="#fff"/><rect x="1" y="3" width="8" height="1" fill="#800000"/><rect x="1" y="5" width="8" height="1" fill="#800000"/><rect x="1" y="7" width="8" height="1" fill="#800000"/><rect x="1" y="9" width="8" height="1" fill="#800000"/><rect x="1" y="11" width="8" height="1" fill="#800000"/><path d="M10.5 6.5 a3 3 0 1 0 0.1 0" fill="none" stroke="#000" stroke-width="1.2" shape-rendering="geometricPrecision"/><circle cx="10.55" cy="9.5" r="2.2" fill="#e0e0e0"/><rect x="9" y="8" width="1" height="1" fill="#fff"/><path d="M12.5 11.5 L15 14" fill="none" stroke="#000" stroke-width="1.6" shape-rendering="geometricPrecision"/></svg>
<svg style="position:absolute;left:567px;top:78px" width="17" height="16" viewBox="0 0 17 16" shape-rendering="crispEdges"><rect x="0" y="0" width="10" height="14" fill="#e00000"/><rect x="0" y="13" width="11" height="1" fill="#000"/><rect x="8" y="0" width="1" height="1" fill="#fff"/><text x="1" y="12" font-family="Liberation Serif" font-weight="bold" font-size="12" fill="#fff">A</text><path d="M10.5 6.5 a3 3 0 1 0 0.1 0" fill="none" stroke="#000" stroke-width="1.2" shape-rendering="geometricPrecision"/><circle cx="10.55" cy="9.5" r="2.2" fill="#e0e0e0"/><rect x="9" y="8" width="1" height="1" fill="#fff"/><path d="M12.5 11.5 L15 14" fill="none" stroke="#000" stroke-width="1.6" shape-rendering="geometricPrecision"/></svg>
<svg style="position:absolute;left:590px;top:78px" width="17" height="16" viewBox="0 0 17 16" shape-rendering="crispEdges"><rect x="0" y="0" width="10" height="14" fill="#e00000"/><rect x="0" y="13" width="11" height="1" fill="#000"/><rect x="8" y="0" width="1" height="1" fill="#fff"/><path d="M1 1 L9 12 M8 2 L2 12" fill="none" stroke="#fff" stroke-width="1.2" shape-rendering="geometricPrecision"/><path d="M10.5 6.5 a3 3 0 1 0 0.1 0" fill="none" stroke="#000" stroke-width="1.2" shape-rendering="geometricPrecision"/><circle cx="10.55" cy="9.5" r="2.2" fill="#e0e0e0"/><rect x="9" y="8" width="1" height="1" fill="#fff"/><path d="M12.5 11.5 L15 14" fill="none" stroke="#000" stroke-width="1.6" shape-rendering="geometricPrecision"/></svg>
<svg style="position:absolute;left:613px;top:78px" width="17" height="16" viewBox="0 0 17 16" shape-rendering="crispEdges"><rect x="0" y="0" width="10" height="14" fill="#e00000"/><rect x="0" y="13" width="11" height="1" fill="#000"/><rect x="8" y="0" width="1" height="1" fill="#fff"/><text x="1" y="12" font-family="Liberation Serif" font-weight="bold" font-size="12" fill="#fff">C</text><path d="M10.5 6.5 a3 3 0 1 0 0.1 0" fill="none" stroke="#000" stroke-width="1.2" shape-rendering="geometricPrecision"/><circle cx="10.55" cy="9.5" r="2.2" fill="#e0e0e0"/><rect x="9" y="8" width="1" height="1" fill="#fff"/><path d="M12.5 11.5 L15 14" fill="none" stroke="#000" stroke-width="1.6" shape-rendering="geometricPrecision"/></svg>
<svg style="position:absolute;left:643px;top:78px" width="17" height="16" viewBox="0 0 17 16" shape-rendering="crispEdges"><rect x="0" y="0" width="9" height="14" fill="#000"/><rect x="1" y="1" width="7" height="12" fill="#fff"/><text x="1" y="11" font-family="Liberation Sans" font-weight="bold" font-size="11" fill="#000080"  shape-rendering="geometricPrecision">?</text><rect x="2" y="12" width="3" height="1" fill="#000080"/><path d="M9.5 5.5 a3 3 0 1 0 0.1 0" fill="none" stroke="#000" stroke-width="1.2" shape-rendering="geometricPrecision"/><circle cx="9.55" cy="8.5" r="2.2" fill="#e0e0e0"/><rect x="8" y="7" width="1" height="1" fill="#fff"/><path d="M11.5 10.5 L14 13" fill="none" stroke="#000" stroke-width="1.6" shape-rendering="geometricPrecision"/></svg>
<svg style="position:absolute;left:666px;top:78px" width="17" height="16" viewBox="0 0 17 16" shape-rendering="crispEdges"><rect x="0" y="0" width="10" height="14" fill="#000"/><rect x="1" y="1" width="8" height="12" fill="#fff"/><text x="1" y="11" font-family="Liberation Sans" font-weight="bold" font-size="11" fill="#000080"  shape-rendering="geometricPrecision">?</text><path d="M10.5 9.5 L14.5 13.5 M14.5 9.5 L10.5 13.5" fill="none" stroke="#000" stroke-width="1" shape-rendering="geometricPrecision"/></svg>
<svg style="position:absolute;left:694px;top:77px" width="17" height="16" viewBox="0 0 17 16" shape-rendering="crispEdges"><rect x="0" y="0" width="10" height="15" fill="#000"/><rect x="1" y="1" width="8" height="13" fill="#fff"/><rect x="3" y="1" width="1" height="1" fill="#000"/><rect x="5" y="1" width="1" height="1" fill="#000"/><rect x="4" y="2" width="1" height="1" fill="#000"/><rect x="6" y="2" width="1" height="1" fill="#000"/><rect x="3" y="3" width="1" height="1" fill="#000"/><rect x="5" y="3" width="1" height="1" fill="#000"/><rect x="4" y="4" width="1" height="1" fill="#000"/><rect x="6" y="4" width="1" height="1" fill="#000"/><rect x="3" y="5" width="1" height="1" fill="#000"/><rect x="5" y="5" width="1" height="1" fill="#000"/><rect x="4" y="6" width="1" height="1" fill="#000"/><rect x="6" y="6" width="1" height="1" fill="#000"/><rect x="3" y="7" width="1" height="1" fill="#000"/><rect x="5" y="7" width="1" height="1" fill="#000"/><rect x="4" y="8" width="1" height="1" fill="#000"/><rect x="6" y="8" width="1" height="1" fill="#000"/><rect x="3" y="9" width="1" height="1" fill="#000"/><rect x="5" y="9" width="1" height="1" fill="#000"/><rect x="4" y="10" width="1" height="1" fill="#000"/><rect x="6" y="10" width="1" height="1" fill="#000"/><rect x="3" y="11" width="1" height="1" fill="#000"/><rect x="5" y="11" width="1" height="1" fill="#000"/><rect x="4" y="12" width="1" height="1" fill="#000"/><rect x="6" y="12" width="1" height="1" fill="#000"/><rect x="3" y="13" width="1" height="1" fill="#000"/><rect x="5" y="13" width="1" height="1" fill="#000"/><path d="M10.5 6.5 a3 3 0 1 0 0.1 0" fill="none" stroke="#000" stroke-width="1.2" shape-rendering="geometricPrecision"/><circle cx="10.55" cy="9.5" r="2.2" fill="#e0e0e0"/><rect x="9" y="8" width="1" height="1" fill="#fff"/><path d="M12.5 11.5 L15 14" fill="none" stroke="#000" stroke-width="1.6" shape-rendering="geometricPrecision"/></svg>
<svg style="position:absolute;left:718px;top:77px" width="17" height="16" viewBox="0 0 17 16" shape-rendering="crispEdges"><rect x="0" y="0" width="11" height="15" fill="#000"/><rect x="1" y="1" width="9" height="13" fill="#fff"/><path d="M0.5 14.5 L2 9.5 L9.5 2 L13 5.5 L5.5 13 Z" fill="#0000ff" shape-rendering="geometricPrecision"/><path d="M6 12 H9 M6 14 H9" fill="none" stroke="#fff" stroke-width="1" shape-rendering="geometricPrecision"/><path d="M11.5 7.5 a3 3 0 1 0 0.1 0" fill="none" stroke="#000" stroke-width="1.2" shape-rendering="geometricPrecision"/><circle cx="11.55" cy="10.5" r="2.2" fill="#e0e0e0"/><rect x="10" y="9" width="1" height="1" fill="#fff"/><path d="M13.5 12.5 L16 15" fill="none" stroke="#000" stroke-width="1.6" shape-rendering="geometricPrecision"/></svg>
<svg style="position:absolute;left:747px;top:77px" width="16" height="16" viewBox="0 0 16 16" shape-rendering="crispEdges"><rect x="0" y="0" width="11" height="14" fill="#000"/><rect x="11" y="3" width="3" height="11" fill="#000"/><rect x="1" y="1" width="9" height="12" fill="#fff"/><rect x="10" y="4" width="3" height="9" fill="#fff"/><rect x="10" y="0" width="1" height="1" fill="#000"/><rect x="11" y="1" width="1" height="1" fill="#000"/><rect x="12" y="2" width="1" height="1" fill="#000"/><path d="M4 7 A3 3 0 0 1 9 5 M10 7 A3 3 0 0 1 5 10" fill="none" stroke="#008000" stroke-width="1.6" shape-rendering="geometricPrecision"/><path d="M8 3 L10.5 5.5 L7.5 6 Z M6 11.5 L3.5 9 L6.5 8.5 Z" fill="#008000" shape-rendering="geometricPrecision"/></svg>
<div style="position:absolute;left:8px;top:106px;width:158px;height:1px;background:#fff;"></div>
<div style="position:absolute;left:8px;top:107px;width:158px;height:1px;background:#808080;"></div>
<div style="position:absolute;left:8px;top:108px;width:158px;height:1px;background:#a8a8a8;"></div>
<div style="position:absolute;left:8px;top:110px;width:158px;height:1px;background:#fff;"></div>
<div style="position:absolute;left:8px;top:111px;width:158px;height:1px;background:#808080;"></div>
<div style="position:absolute;left:8px;top:112px;width:158px;height:1px;background:#a8a8a8;"></div>
<div style="position:absolute;left:169px;top:103px;width:12px;height:12px;background:#000;"></div>
<div style="position:absolute;left:169px;top:103px;width:11px;height:11px;background:#fff;"></div>
<div style="position:absolute;left:170px;top:104px;width:10px;height:10px;background:#808080;"></div>
<div style="position:absolute;left:170px;top:104px;width:9px;height:9px;background:#c0c0c0;"></div>
<div style="position:absolute;left:171px;top:105px;width:8px;height:8px;background:#c0c0c0;"></div>
<svg style="position:absolute;left:172px;top:107px" width="7" height="4"><path d="M0 4 H7 L3.5 0 Z" fill="#808080"/></svg>
<div style="position:absolute;left:183px;top:103px;width:12px;height:12px;background:#000;"></div>
<div style="position:absolute;left:183px;top:103px;width:11px;height:11px;background:#fff;"></div>
<div style="position:absolute;left:184px;top:104px;width:10px;height:10px;background:#808080;"></div>
<div style="position:absolute;left:184px;top:104px;width:9px;height:9px;background:#c0c0c0;"></div>
<div style="position:absolute;left:185px;top:105px;width:8px;height:8px;background:#c0c0c0;"></div>
<svg style="position:absolute;left:186px;top:106px" width="7" height="6"><path d="M0.5 0.5 L6.5 5.5 M6.5 0.5 L0.5 5.5" stroke="#000" stroke-width="1.5"/></svg>
<div style="position:absolute;left:10px;top:119px;width:184px;height:194px;background:#000;"></div>
<div style="position:absolute;left:10px;top:119px;width:183px;height:193px;background:#fff;"></div>
<div style="position:absolute;left:11px;top:120px;width:182px;height:192px;background:#c0c0c0;"></div>
<div style="position:absolute;left:12px;top:121px;width:181px;height:190px;background:#fff;"></div>
<div style="position:absolute;left:12px;top:121px;width:180px;height:189px;background:#808080;"></div>
<div style="position:absolute;left:13px;top:122px;width:179px;height:188px;background:#dfdfdf;"></div>
<div style="position:absolute;left:13px;top:122px;width:178px;height:187px;background:#000;"></div>
<div style="position:absolute;left:14px;top:123px;width:177px;height:186px;background:#fff;"></div>
<div style="position:absolute;left:174px;top:139px;width:16px;height:155px;background:repeating-conic-gradient(#fff 0 25%,#c0c0c0 0 50%) 0 0/2px 2px;"></div>
<div style="position:absolute;left:174px;top:123px;width:16px;height:16px;background:#000;"></div>
<div style="position:absolute;left:174px;top:123px;width:15px;height:15px;background:#fff;"></div>
<div style="position:absolute;left:175px;top:124px;width:14px;height:14px;background:#808080;"></div>
<div style="position:absolute;left:175px;top:124px;width:13px;height:13px;background:#dfdfdf;"></div>
<div style="position:absolute;left:176px;top:125px;width:12px;height:12px;background:#c0c0c0;"></div>
<svg style="position:absolute;left:178px;top:129px" width="8" height="4"><path d="M0 4 H7 L3.5 0.5 Z" fill="#000"/></svg>
<div style="position:absolute;left:174px;top:188px;width:16px;height:31px;background:#000;"></div>
<div style="position:absolute;left:174px;top:188px;width:15px;height:30px;background:#fff;"></div>
<div style="position:absolute;left:175px;top:189px;width:14px;height:29px;background:#808080;"></div>
<div style="position:absolute;left:175px;top:189px;width:13px;height:28px;background:#dfdfdf;"></div>
<div style="position:absolute;left:176px;top:190px;width:12px;height:27px;background:#c0c0c0;"></div>
<div style="position:absolute;left:174px;top:293px;width:16px;height:16px;background:#000;"></div>
<div style="position:absolute;left:174px;top:293px;width:15px;height:15px;background:#fff;"></div>
<div style="position:absolute;left:175px;top:294px;width:14px;height:14px;background:#808080;"></div>
<div style="position:absolute;left:175px;top:294px;width:13px;height:13px;background:#dfdfdf;"></div>
<div style="position:absolute;left:176px;top:295px;width:12px;height:12px;background:#c0c0c0;"></div>
<svg style="position:absolute;left:178px;top:299px" width="8" height="4"><path d="M0 0 H7 L3.5 3.5 Z" fill="#000"/></svg>
<div style="position:absolute;left:14px;top:123px;width:160px;height:186px;overflow:hidden;">
<div style="position:absolute;left:-14px;top:-123px;width:200px;height:400px;">
<div style="position:absolute;left:41px;top:123px;width:1px;height:186px;background:repeating-linear-gradient(#808080 0 1px,transparent 1px 2px);"></div>
<div style="position:absolute;left:60px;top:139px;width:1px;height:170px;background:repeating-linear-gradient(#808080 0 1px,transparent 1px 2px);"></div>
<div style="position:absolute;left:46px;top:131px;width:7px;height:1px;background:repeating-linear-gradient(90deg,#808080 0 1px,transparent 1px 2px);"></div>
<div style="position:absolute;left:37px;top:127px;width:9px;height:9px;background:#808080;"></div>
<div style="position:absolute;left:38px;top:128px;width:7px;height:7px;background:#fff;"></div>
<div style="position:absolute;left:39px;top:131px;width:5px;height:1px;background:#000;"></div>
<svg style="position:absolute;left:53px;top:122px" width="16" height="16" viewBox="0 0 16 16" shape-rendering="crispEdges"><rect x="2" y="2" width="6" height="1" fill="#808040"/><rect x="1" y="3" width="1" height="1" fill="#808060"/><rect x="8" y="3" width="1" height="1" fill="#808060"/><rect x="0" y="4" width="1" height="10" fill="#808080"/><rect x="9" y="4" width="5" height="1" fill="#808080"/><rect x="2" y="3" width="6" height="1" fill="#f4f4b0"/><rect x="1" y="4" width="8" height="1" fill="#f4f4b0"/><rect x="1" y="5" width="13" height="9" fill="url(#dy)"/><rect x="14" y="4" width="1" height="11" fill="#000"/><rect x="1" y="14" width="14" height="1" fill="#000"/><rect x="1" y="7" width="13" height="1" fill="#a0a040"/><rect x="1" y="8" width="13" height="6" fill="#f4f4c8"/><rect x="3" y="10" width="2" height="1" fill="#000"/><rect x="4" y="11" width="3" height="1" fill="#000"/><rect x="6" y="12" width="2" height="1" fill="#000"/><rect x="8" y="11" width="2" height="1" fill="#000"/><rect x="10" y="10" width="2" height="1" fill="#000"/><rect x="12" y="9" width="1" height="1" fill="#000"/></svg>
<div style="position:absolute;left:71px;top:123px;width:32px;height:16px;background:#c0c0c0;"></div>
<div style="position:absolute;left:73px;top:125px;font-size:11px;line-height:13px;color:#000;white-space:pre;letter-spacing:-0.2px;">spider</div>
<div style="position:absolute;left:62px;top:147px;width:9px;height:1px;background:repeating-linear-gradient(90deg,#808080 0 1px,transparent 1px 2px);"></div>
<svg style="position:absolute;left:71px;top:138px" width="16" height="16" viewBox="0 0 16 16" shape-rendering="crispEdges"><rect x="2" y="2" width="6" height="1" fill="#808040"/><rect x="1" y="3" width="1" height="1" fill="#808060"/><rect x="8" y="3" width="1" height="1" fill="#808060"/><rect x="0" y="4" width="1" height="10" fill="#808080"/><rect x="9" y="4" width="5" height="1" fill="#808080"/><rect x="2" y="3" width="6" height="1" fill="#f4f4b0"/><rect x="1" y="4" width="8" height="1" fill="#f4f4b0"/><rect x="1" y="5" width="13" height="9" fill="url(#dy)"/><rect x="14" y="4" width="1" height="11" fill="#000"/><rect x="1" y="14" width="14" height="1" fill="#000"/></svg>
<div style="position:absolute;left:92px;top:141px;font-size:11px;line-height:13px;color:#000;white-space:pre;letter-spacing:-0.2px;">bpqtemp</div>
<div style="position:absolute;left:62px;top:163px;width:9px;height:1px;background:repeating-linear-gradient(90deg,#808080 0 1px,transparent 1px 2px);"></div>
<div style="position:absolute;left:56px;top:159px;width:9px;height:9px;background:#808080;"></div>
<div style="position:absolute;left:57px;top:160px;width:7px;height:7px;background:#fff;"></div>
<div style="position:absolute;left:58px;top:163px;width:5px;height:1px;background:#000;"></div>
<div style="position:absolute;left:60px;top:161px;width:1px;height:5px;background:#000;"></div>
<svg style="position:absolute;left:71px;top:154px" width="16" height="16" viewBox="0 0 16 16" shape-rendering="crispEdges"><rect x="2" y="2" width="6" height="1" fill="#808040"/><rect x="1" y="3" width="1" height="1" fill="#808060"/><rect x="8" y="3" width="1" height="1" fill="#808060"/><rect x="0" y="4" width="1" height="10" fill="#808080"/><rect x="9" y="4" width="5" height="1" fill="#808080"/><rect x="2" y="3" width="6" height="1" fill="#f4f4b0"/><rect x="1" y="4" width="8" height="1" fill="#f4f4b0"/><rect x="1" y="5" width="13" height="9" fill="url(#dy)"/><rect x="14" y="4" width="1" height="11" fill="#000"/><rect x="1" y="14" width="14" height="1" fill="#000"/><rect x="4" y="7" width="1" height="1" fill="#000"/><rect x="11" y="7" width="1" height="1" fill="#000"/><rect x="3" y="8" width="3" height="1" fill="#000"/><rect x="9" y="8" width="2" height="1" fill="#000"/><rect x="2" y="9" width="8" height="1" fill="#000"/><rect x="3" y="10" width="5" height="1" fill="#000"/><rect x="4" y="11" width="3" height="1" fill="#000"/></svg>
<div style="position:absolute;left:92px;top:157px;font-size:11px;line-height:13px;color:#000;white-space:pre;letter-spacing:-0.2px;">cmd</div>
<div style="position:absolute;left:62px;top:179px;width:9px;height:1px;background:repeating-linear-gradient(90deg,#808080 0 1px,transparent 1px 2px);"></div>
<svg style="position:absolute;left:71px;top:170px" width="16" height="16" viewBox="0 0 16 16" shape-rendering="crispEdges"><rect x="2" y="2" width="6" height="1" fill="#808040"/><rect x="1" y="3" width="1" height="1" fill="#808060"/><rect x="8" y="3" width="1" height="1" fill="#808060"/><rect x="0" y="4" width="1" height="10" fill="#808080"/><rect x="9" y="4" width="5" height="1" fill="#808080"/><rect x="2" y="3" width="6" height="1" fill="#f4f4b0"/><rect x="1" y="4" width="8" height="1" fill="#f4f4b0"/><rect x="1" y="5" width="13" height="9" fill="url(#dy)"/><rect x="14" y="4" width="1" height="11" fill="#000"/><rect x="1" y="14" width="14" height="1" fill="#000"/><rect x="4" y="7" width="1" height="1" fill="#000"/><rect x="11" y="7" width="1" height="1" fill="#000"/><rect x="3" y="8" width="3" height="1" fill="#000"/><rect x="9" y="8" width="2" height="1" fill="#000"/><rect x="2" y="9" width="8" height="1" fill="#000"/><rect x="3" y="10" width="5" height="1" fill="#000"/><rect x="4" y="11" width="3" height="1" fill="#000"/></svg>
<div style="position:absolute;left:92px;top:173px;font-size:11px;line-height:13px;color:#000;white-space:pre;letter-spacing:-0.2px;">connect</div>
<div style="position:absolute;left:62px;top:195px;width:9px;height:1px;background:repeating-linear-gradient(90deg,#808080 0 1px,transparent 1px 2px);"></div>
<div style="position:absolute;left:56px;top:191px;width:9px;height:9px;background:#808080;"></div>
<div style="position:absolute;left:57px;top:192px;width:7px;height:7px;background:#fff;"></div>
<div style="position:absolute;left:58px;top:195px;width:5px;height:1px;background:#000;"></div>
<div style="position:absolute;left:60px;top:193px;width:1px;height:5px;background:#000;"></div>
<svg style="position:absolute;left:71px;top:186px" width="16" height="16" viewBox="0 0 16 16" shape-rendering="crispEdges"><rect x="2" y="2" width="6" height="1" fill="#808040"/><rect x="1" y="3" width="1" height="1" fill="#808060"/><rect x="8" y="3" width="1" height="1" fill="#808060"/><rect x="0" y="4" width="1" height="10" fill="#808080"/><rect x="9" y="4" width="5" height="1" fill="#808080"/><rect x="2" y="3" width="6" height="1" fill="#f4f4b0"/><rect x="1" y="4" width="8" height="1" fill="#f4f4b0"/><rect x="1" y="5" width="13" height="9" fill="url(#dy)"/><rect x="14" y="4" width="1" height="11" fill="#000"/><rect x="1" y="14" width="14" height="1" fill="#000"/><rect x="4" y="7" width="1" height="1" fill="#000"/><rect x="11" y="7" width="1" height="1" fill="#000"/><rect x="3" y="8" width="3" height="1" fill="#000"/><rect x="9" y="8" width="2" height="1" fill="#000"/><rect x="2" y="9" width="8" height="1" fill="#000"/><rect x="3" y="10" width="5" height="1" fill="#000"/><rect x="4" y="11" width="3" height="1" fill="#000"/></svg>
<div style="position:absolute;left:92px;top:189px;font-size:11px;line-height:13px;color:#000;white-space:pre;letter-spacing:-0.2px;">contrib</div>
<div style="position:absolute;left:62px;top:211px;width:9px;height:1px;background:repeating-linear-gradient(90deg,#808080 0 1px,transparent 1px 2px);"></div>
<div style="position:absolute;left:56px;top:207px;width:9px;height:9px;background:#808080;"></div>
<div style="position:absolute;left:57px;top:208px;width:7px;height:7px;background:#fff;"></div>
<div style="position:absolute;left:58px;top:211px;width:5px;height:1px;background:#000;"></div>
<div style="position:absolute;left:60px;top:209px;width:1px;height:5px;background:#000;"></div>
<svg style="position:absolute;left:71px;top:202px" width="16" height="16" viewBox="0 0 16 16" shape-rendering="crispEdges"><rect x="2" y="2" width="6" height="1" fill="#808040"/><rect x="1" y="3" width="1" height="1" fill="#808060"/><rect x="8" y="3" width="1" height="1" fill="#808060"/><rect x="0" y="4" width="1" height="10" fill="#808080"/><rect x="9" y="4" width="5" height="1" fill="#808080"/><rect x="2" y="3" width="6" height="1" fill="#f4f4b0"/><rect x="1" y="4" width="8" height="1" fill="#f4f4b0"/><rect x="1" y="5" width="13" height="9" fill="url(#dy)"/><rect x="14" y="4" width="1" height="11" fill="#000"/><rect x="1" y="14" width="14" height="1" fill="#000"/><rect x="4" y="7" width="1" height="1" fill="#000"/><rect x="11" y="7" width="1" height="1" fill="#000"/><rect x="3" y="8" width="3" height="1" fill="#000"/><rect x="9" y="8" width="2" height="1" fill="#000"/><rect x="2" y="9" width="8" height="1" fill="#000"/><rect x="3" y="10" width="5" height="1" fill="#000"/><rect x="4" y="11" width="3" height="1" fill="#000"/></svg>
<div style="position:absolute;left:92px;top:205px;font-size:11px;line-height:13px;color:#000;white-space:pre;letter-spacing:-0.2px;">data</div>
<div style="position:absolute;left:62px;top:227px;width:9px;height:1px;background:repeating-linear-gradient(90deg,#808080 0 1px,transparent 1px 2px);"></div>
<svg style="position:absolute;left:71px;top:218px" width="16" height="16" viewBox="0 0 16 16" shape-rendering="crispEdges"><rect x="2" y="2" width="6" height="1" fill="#808040"/><rect x="1" y="3" width="1" height="1" fill="#808060"/><rect x="8" y="3" width="1" height="1" fill="#808060"/><rect x="0" y="4" width="1" height="10" fill="#808080"/><rect x="9" y="4" width="5" height="1" fill="#808080"/><rect x="2" y="3" width="6" height="1" fill="#f4f4b0"/><rect x="1" y="4" width="8" height="1" fill="#f4f4b0"/><rect x="1" y="5" width="13" height="9" fill="url(#dy)"/><rect x="14" y="4" width="1" height="11" fill="#000"/><rect x="1" y="14" width="14" height="1" fill="#000"/></svg>
<div style="position:absolute;left:92px;top:221px;font-size:11px;line-height:13px;color:#000;white-space:pre;letter-spacing:-0.2px;">db</div>
<div style="position:absolute;left:62px;top:243px;width:9px;height:1px;background:repeating-linear-gradient(90deg,#808080 0 1px,transparent 1px 2px);"></div>
<div style="position:absolute;left:56px;top:239px;width:9px;height:9px;background:#808080;"></div>
<div style="position:absolute;left:57px;top:240px;width:7px;height:7px;background:#fff;"></div>
<div style="position:absolute;left:58px;top:243px;width:5px;height:1px;background:#000;"></div>
<div style="position:absolute;left:60px;top:241px;width:1px;height:5px;background:#000;"></div>
<svg style="position:absolute;left:71px;top:234px" width="16" height="16" viewBox="0 0 16 16" shape-rendering="crispEdges"><rect x="2" y="2" width="6" height="1" fill="#808040"/><rect x="1" y="3" width="1" height="1" fill="#808060"/><rect x="8" y="3" width="1" height="1" fill="#808060"/><rect x="0" y="4" width="1" height="10" fill="#808080"/><rect x="9" y="4" width="5" height="1" fill="#808080"/><rect x="2" y="3" width="6" height="1" fill="#f4f4b0"/><rect x="1" y="4" width="8" height="1" fill="#f4f4b0"/><rect x="1" y="5" width="13" height="9" fill="url(#dy)"/><rect x="14" y="4" width="1" height="11" fill="#000"/><rect x="1" y="14" width="14" height="1" fill="#000"/></svg>
<div style="position:absolute;left:92px;top:237px;font-size:11px;line-height:13px;color:#000;white-space:pre;letter-spacing:-0.2px;">debug</div>
<div style="position:absolute;left:62px;top:259px;width:9px;height:1px;background:repeating-linear-gradient(90deg,#808080 0 1px,transparent 1px 2px);"></div>
<svg style="position:absolute;left:71px;top:250px" width="16" height="16" viewBox="0 0 16 16" shape-rendering="crispEdges"><rect x="2" y="2" width="6" height="1" fill="#808040"/><rect x="1" y="3" width="1" height="1" fill="#808060"/><rect x="8" y="3" width="1" height="1" fill="#808060"/><rect x="0" y="4" width="1" height="10" fill="#808080"/><rect x="9" y="4" width="5" height="1" fill="#808080"/><rect x="2" y="3" width="6" height="1" fill="#f4f4b0"/><rect x="1" y="4" width="8" height="1" fill="#f4f4b0"/><rect x="1" y="5" width="13" height="9" fill="url(#dy)"/><rect x="14" y="4" width="1" height="11" fill="#000"/><rect x="1" y="14" width="14" height="1" fill="#000"/><rect x="4" y="7" width="1" height="1" fill="#000"/><rect x="11" y="7" width="1" height="1" fill="#000"/><rect x="3" y="8" width="3" height="1" fill="#000"/><rect x="9" y="8" width="2" height="1" fill="#000"/><rect x="2" y="9" width="8" height="1" fill="#000"/><rect x="3" y="10" width="5" height="1" fill="#000"/><rect x="4" y="11" width="3" height="1" fill="#000"/></svg>
<div style="position:absolute;left:92px;top:253px;font-size:11px;line-height:13px;color:#000;white-space:pre;letter-spacing:-0.2px;">examples</div>
<div style="position:absolute;left:62px;top:275px;width:9px;height:1px;background:repeating-linear-gradient(90deg,#808080 0 1px,transparent 1px 2px);"></div>
<div style="position:absolute;left:56px;top:271px;width:9px;height:9px;background:#808080;"></div>
<div style="position:absolute;left:57px;top:272px;width:7px;height:7px;background:#fff;"></div>
<div style="position:absolute;left:58px;top:275px;width:5px;height:1px;background:#000;"></div>
<div style="position:absolute;left:60px;top:273px;width:1px;height:5px;background:#000;"></div>
<svg style="position:absolute;left:71px;top:266px" width="16" height="16" viewBox="0 0 16 16" shape-rendering="crispEdges"><rect x="2" y="2" width="6" height="1" fill="#808040"/><rect x="1" y="3" width="1" height="1" fill="#808060"/><rect x="8" y="3" width="1" height="1" fill="#808060"/><rect x="0" y="4" width="1" height="10" fill="#808080"/><rect x="9" y="4" width="5" height="1" fill="#808080"/><rect x="2" y="3" width="6" height="1" fill="#f4f4b0"/><rect x="1" y="4" width="8" height="1" fill="#f4f4b0"/><rect x="1" y="5" width="13" height="9" fill="url(#dy)"/><rect x="14" y="4" width="1" height="11" fill="#000"/><rect x="1" y="14" width="14" height="1" fill="#000"/><rect x="4" y="7" width="1" height="1" fill="#000"/><rect x="11" y="7" width="1" height="1" fill="#000"/><rect x="3" y="8" width="3" height="1" fill="#000"/><rect x="9" y="8" width="2" height="1" fill="#000"/><rect x="2" y="9" width="8" height="1" fill="#000"/><rect x="3" y="10" width="5" height="1" fill="#000"/><rect x="4" y="11" width="3" height="1" fill="#000"/></svg>
<div style="position:absolute;left:92px;top:269px;font-size:11px;line-height:13px;color:#000;white-space:pre;letter-spacing:-0.2px;">filter</div>
<div style="position:absolute;left:62px;top:291px;width:9px;height:1px;background:repeating-linear-gradient(90deg,#808080 0 1px,transparent 1px 2px);"></div>
<svg style="position:absolute;left:71px;top:282px" width="16" height="16" viewBox="0 0 16 16" shape-rendering="crispEdges"><rect x="2" y="2" width="6" height="1" fill="#808040"/><rect x="1" y="3" width="1" height="1" fill="#808060"/><rect x="8" y="3" width="1" height="1" fill="#808060"/><rect x="0" y="4" width="1" height="10" fill="#808080"/><rect x="9" y="4" width="5" height="1" fill="#808080"/><rect x="2" y="3" width="6" height="1" fill="#f4f4b0"/><rect x="1" y="4" width="8" height="1" fill="#f4f4b0"/><rect x="1" y="5" width="13" height="9" fill="url(#dy)"/><rect x="14" y="4" width="1" height="11" fill="#000"/><rect x="1" y="14" width="14" height="1" fill="#000"/><rect x="4" y="7" width="1" height="1" fill="#000"/><rect x="11" y="7" width="1" height="1" fill="#000"/><rect x="3" y="8" width="3" height="1" fill="#000"/><rect x="9" y="8" width="2" height="1" fill="#000"/><rect x="2" y="9" width="8" height="1" fill="#000"/><rect x="3" y="10" width="5" height="1" fill="#000"/><rect x="4" y="11" width="3" height="1" fill="#000"/></svg>
<div style="position:absolute;left:92px;top:285px;font-size:11px;line-height:13px;color:#000;white-space:pre;letter-spacing:-0.2px;">gtkconsole</div>
<div style="position:absolute;left:62px;top:307px;width:9px;height:1px;background:repeating-linear-gradient(90deg,#808080 0 1px,transparent 1px 2px);"></div>
<svg style="position:absolute;left:71px;top:298px" width="16" height="16" viewBox="0 0 16 16" shape-rendering="crispEdges"><rect x="2" y="2" width="6" height="1" fill="#808040"/><rect x="1" y="3" width="1" height="1" fill="#808060"/><rect x="8" y="3" width="1" height="1" fill="#808060"/><rect x="0" y="4" width="1" height="10" fill="#808080"/><rect x="9" y="4" width="5" height="1" fill="#808080"/><rect x="2" y="3" width="6" height="1" fill="#f4f4b0"/><rect x="1" y="4" width="8" height="1" fill="#f4f4b0"/><rect x="1" y="5" width="13" height="9" fill="url(#dy)"/><rect x="14" y="4" width="1" height="11" fill="#000"/><rect x="1" y="14" width="14" height="1" fill="#000"/><rect x="4" y="7" width="1" height="1" fill="#000"/><rect x="11" y="7" width="1" height="1" fill="#000"/><rect x="3" y="8" width="3" height="1" fill="#000"/><rect x="9" y="8" width="2" height="1" fill="#000"/><rect x="2" y="9" width="8" height="1" fill="#000"/><rect x="3" y="10" width="5" height="1" fill="#000"/><rect x="4" y="11" width="3" height="1" fill="#000"/></svg>
<div style="position:absolute;left:92px;top:301px;font-size:11px;line-height:13px;color:#000;white-space:pre;letter-spacing:-0.2px;">html</div>
</div></div>
<div style="position:absolute;left:87px;top:312px;width:68px;height:20px;background:#000;"></div>
<div style="position:absolute;left:88px;top:313px;width:66px;height:18px;background:#808080;"></div>
<div style="position:absolute;left:88px;top:313px;width:65px;height:17px;background:#dfdfdf;"></div>
<div style="position:absolute;left:89px;top:314px;width:64px;height:16px;background:#c0c0c0;"></div>
<svg style="position:absolute;left:92px;top:314px" width="16" height="16" viewBox="0 0 16 16" shape-rendering="crispEdges"><rect x="3" y="1" width="10" height="9" fill="#000"/><rect x="4" y="2" width="8" height="7" fill="#c0c0c0"/><rect x="5" y="3" width="6" height="5" fill="#008080"/><rect x="5" y="3" width="6" height="1" fill="#004040"/><rect x="5" y="3" width="1" height="5" fill="#004040"/><rect x="6" y="4" width="4" height="1" fill="#80c0c0"/><rect x="4" y="10" width="8" height="1" fill="#808080"/><rect x="1" y="11" width="13" height="1" fill="#000"/><rect x="1" y="12" width="13" height="2" fill="#c0c0c0"/><rect x="0" y="13" width="15" height="1" fill="#000"/><rect x="2" y="12" width="1" height="1" fill="#000"/><rect x="4" y="12" width="1" height="1" fill="#000"/><rect x="6" y="12" width="1" height="1" fill="#000"/><rect x="8" y="12" width="1" height="1" fill="#000"/><rect x="10" y="12" width="1" height="1" fill="#000"/><rect x="12" y="12" width="1" height="1" fill="#000"/></svg>
<div style="position:absolute;left:113px;top:316px;font-size:11px;line-height:13px;color:#000;white-space:pre;letter-spacing:-0.2px;">Explore</div>
<div style="position:absolute;left:11px;top:311px;width:76px;height:2px;background:#c0c0c0;"></div>
<div style="position:absolute;left:11px;top:310px;width:1px;height:22px;background:#fff;"></div>
<div style="position:absolute;left:12px;top:332px;width:73px;height:1px;background:#808080;"></div>
<div style="position:absolute;left:12px;top:333px;width:74px;height:1px;background:#000;"></div>
<div style="position:absolute;left:85px;top:310px;width:1px;height:22px;background:#808080;"></div>
<svg style="position:absolute;left:19px;top:315px" width="16" height="16" viewBox="0 0 16 16" shape-rendering="crispEdges"><rect x="2" y="2" width="6" height="1" fill="#808040"/><rect x="1" y="3" width="1" height="1" fill="#808060"/><rect x="8" y="3" width="1" height="1" fill="#808060"/><rect x="0" y="4" width="1" height="10" fill="#808080"/><rect x="9" y="4" width="5" height="1" fill="#808080"/><rect x="2" y="3" width="6" height="1" fill="#f4f4b0"/><rect x="1" y="4" width="8" height="1" fill="#f4f4b0"/><rect x="1" y="5" width="13" height="9" fill="url(#dy)"/><rect x="14" y="4" width="1" height="11" fill="#000"/><rect x="1" y="14" width="14" height="1" fill="#000"/></svg>
<div style="position:absolute;left:40px;top:318px;font-size:11px;line-height:13px;color:#000;white-space:pre;letter-spacing:-0.2px;">Modules</div>
<div style="position:absolute;left:201px;top:99px;width:1px;height:241px;background:#fff;"></div>
<div style="position:absolute;left:4px;top:99px;width:198px;height:1px;background:#fff;"></div>
<div style="position:absolute;left:204px;top:98px;width:560px;height:243px;background:#fff;"></div>
<div style="position:absolute;left:204px;top:98px;width:559px;height:242px;background:#808080;"></div>
<div style="position:absolute;left:205px;top:99px;width:558px;height:241px;background:#c0c0c0;"></div>
<div style="position:absolute;left:205px;top:99px;width:557px;height:240px;background:#000;"></div>
<div style="position:absolute;left:206px;top:100px;width:556px;height:239px;background:#fff;"></div>
<div style="position:absolute;left:206px;top:100px;width:150px;height:17px;background:#000;"></div>
<div style="position:absolute;left:206px;top:100px;width:149px;height:15px;background:#fff;"></div>
<div style="position:absolute;left:207px;top:101px;width:148px;height:14px;background:#c0c0c0;"></div>
<div style="position:absolute;left:212px;top:103px;font-size:11px;line-height:13px;color:#000;white-space:pre;letter-spacing:-0.2px;">Name</div>
<div style="position:absolute;left:356px;top:100px;width:50px;height:17px;background:#000;"></div>
<div style="position:absolute;left:356px;top:100px;width:49px;height:15px;background:#fff;"></div>
<div style="position:absolute;left:357px;top:101px;width:48px;height:14px;background:#c0c0c0;"></div>
<div style="position:absolute;left:362px;top:103px;font-size:11px;line-height:13px;color:#000;white-space:pre;letter-spacing:-0.2px;">Rev.</div>
<div style="position:absolute;left:406px;top:100px;width:50px;height:17px;background:#000;"></div>
<div style="position:absolute;left:406px;top:100px;width:49px;height:15px;background:#fff;"></div>
<div style="position:absolute;left:407px;top:101px;width:48px;height:14px;background:#c0c0c0;"></div>
<div style="position:absolute;left:412px;top:103px;font-size:11px;line-height:13px;color:#000;white-space:pre;letter-spacing:-0.2px;">Option</div>
<div style="position:absolute;left:456px;top:100px;width:100px;height:17px;background:#000;"></div>
<div style="position:absolute;left:456px;top:100px;width:99px;height:15px;background:#fff;"></div>
<div style="position:absolute;left:457px;top:101px;width:98px;height:14px;background:#c0c0c0;"></div>
<div style="position:absolute;left:462px;top:103px;font-size:11px;line-height:13px;color:#000;white-space:pre;letter-spacing:-0.2px;">Status</div>
<div style="position:absolute;left:556px;top:100px;width:150px;height:17px;background:#000;"></div>
<div style="position:absolute;left:556px;top:100px;width:149px;height:15px;background:#fff;"></div>
<div style="position:absolute;left:557px;top:101px;width:148px;height:14px;background:#c0c0c0;"></div>
<div style="position:absolute;left:562px;top:103px;font-size:11px;line-height:13px;color:#000;white-space:pre;letter-spacing:-0.2px;">Tag</div>
<div style="position:absolute;left:706px;top:100px;width:54px;height:17px;background:#000;"></div>
<div style="position:absolute;left:706px;top:100px;width:53px;height:15px;background:#fff;"></div>
<div style="position:absolute;left:707px;top:101px;width:52px;height:14px;background:#c0c0c0;"></div>
<div style="position:absolute;left:712px;top:103px;font-size:11px;line-height:13px;color:#000;white-space:pre;letter-spacing:-0.2px;">Date</div>
<svg style="position:absolute;left:342px;top:103px" width="11" height="11"><path d="M5.5 0.5 L0.5 10.5 H10.5 Z" fill="none" stroke="#808080" stroke-width="1"/><path d="M0.5 10.5 H10.5 L5.5 0.5" fill="none" stroke="#fff" stroke-width="1"/></svg>
<div style="position:absolute;left:206px;top:117px;width:540px;height:206px;overflow:hidden;">
<div style="position:absolute;left:-206px;top:-117px;width:768px;height:400px;">
<svg style="position:absolute;left:225px;top:118px" width="16" height="16" viewBox="0 0 16 16" shape-rendering="crispEdges"><rect x="2" y="2" width="6" height="1" fill="#808040"/><rect x="1" y="3" width="1" height="1" fill="#808060"/><rect x="8" y="3" width="1" height="1" fill="#808060"/><rect x="0" y="4" width="1" height="10" fill="#808080"/><rect x="9" y="4" width="5" height="1" fill="#808080"/><rect x="2" y="3" width="6" height="1" fill="#f4f4b0"/><rect x="1" y="4" width="8" height="1" fill="#f4f4b0"/><rect x="1" y="5" width="13" height="9" fill="url(#dy)"/><rect x="14" y="4" width="1" height="11" fill="#000"/><rect x="1" y="14" width="14" height="1" fill="#000"/><rect x="4" y="7" width="1" height="1" fill="#000"/><rect x="11" y="7" width="1" height="1" fill="#000"/><rect x="3" y="8" width="3" height="1" fill="#000"/><rect x="9" y="8" width="2" height="1" fill="#000"/><rect x="2" y="9" width="8" height="1" fill="#000"/><rect x="3" y="10" width="5" height="1" fill="#000"/><rect x="4" y="11" width="3" height="1" fill="#000"/></svg>
<div style="position:absolute;left:242px;top:122px;font-size:11px;line-height:13px;color:#000;white-space:pre;letter-spacing:-0.2px;">txt</div>
<div style="position:absolute;left:462px;top:122px;font-size:11px;line-height:13px;color:#000;white-space:pre;letter-spacing:-0.2px;">Folder</div>
<svg style="position:absolute;left:225px;top:135px" width="16" height="16" viewBox="0 0 16 16" shape-rendering="crispEdges"><rect x="2" y="2" width="6" height="1" fill="#808040"/><rect x="1" y="3" width="1" height="1" fill="#808060"/><rect x="8" y="3" width="1" height="1" fill="#808060"/><rect x="0" y="4" width="1" height="10" fill="#808080"/><rect x="9" y="4" width="5" height="1" fill="#808080"/><rect x="2" y="3" width="6" height="1" fill="#f4f4b0"/><rect x="1" y="4" width="8" height="1" fill="#f4f4b0"/><rect x="1" y="5" width="13" height="9" fill="url(#dy)"/><rect x="14" y="4" width="1" height="11" fill="#000"/><rect x="1" y="14" width="14" height="1" fill="#000"/><rect x="4" y="7" width="1" height="1" fill="#000"/><rect x="11" y="7" width="1" height="1" fill="#000"/><rect x="3" y="8" width="3" height="1" fill="#000"/><rect x="9" y="8" width="2" height="1" fill="#000"/><rect x="2" y="9" width="8" height="1" fill="#000"/><rect x="3" y="10" width="5" height="1" fill="#000"/><rect x="4" y="11" width="3" height="1" fill="#000"/></svg>
<div style="position:absolute;left:242px;top:139px;font-size:11px;line-height:13px;color:#000;white-space:pre;letter-spacing:-0.2px;">src</div>
<div style="position:absolute;left:462px;top:139px;font-size:11px;line-height:13px;color:#000;white-space:pre;letter-spacing:-0.2px;">Folder</div>
<svg style="position:absolute;left:225px;top:152px" width="16" height="16" viewBox="0 0 16 16" shape-rendering="crispEdges"><rect x="2" y="2" width="6" height="1" fill="#808040"/><rect x="1" y="3" width="1" height="1" fill="#808060"/><rect x="8" y="3" width="1" height="1" fill="#808060"/><rect x="0" y="4" width="1" height="10" fill="#808080"/><rect x="9" y="4" width="5" height="1" fill="#808080"/><rect x="2" y="3" width="6" height="1" fill="#f4f4b0"/><rect x="1" y="4" width="8" height="1" fill="#f4f4b0"/><rect x="1" y="5" width="13" height="9" fill="url(#dy)"/><rect x="14" y="4" width="1" height="11" fill="#000"/><rect x="1" y="14" width="14" height="1" fill="#000"/><rect x="4" y="7" width="1" height="1" fill="#000"/><rect x="11" y="7" width="1" height="1" fill="#000"/><rect x="3" y="8" width="3" height="1" fill="#000"/><rect x="9" y="8" width="2" height="1" fill="#000"/><rect x="2" y="9" width="8" height="1" fill="#000"/><rect x="3" y="10" width="5" height="1" fill="#000"/><rect x="4" y="11" width="3" height="1" fill="#000"/></svg>
<div style="position:absolute;left:242px;top:156px;font-size:11px;line-height:13px;color:#000;white-space:pre;letter-spacing:-0.2px;">SpiderConsole</div>
<div style="position:absolute;left:462px;top:156px;font-size:11px;line-height:13px;color:#000;white-space:pre;letter-spacing:-0.2px;">Folder</div>
<svg style="position:absolute;left:225px;top:169px" width="16" height="16" viewBox="0 0 16 16" shape-rendering="crispEdges"><rect x="2" y="2" width="6" height="1" fill="#808040"/><rect x="1" y="3" width="1" height="1" fill="#808060"/><rect x="8" y="3" width="1" height="1" fill="#808060"/><rect x="0" y="4" width="1" height="10" fill="#808080"/><rect x="9" y="4" width="5" height="1" fill="#808080"/><rect x="2" y="3" width="6" height="1" fill="#f4f4b0"/><rect x="1" y="4" width="8" height="1" fill="#f4f4b0"/><rect x="1" y="5" width="13" height="9" fill="url(#dy)"/><rect x="14" y="4" width="1" height="11" fill="#000"/><rect x="1" y="14" width="14" height="1" fill="#000"/><rect x="4" y="7" width="1" height="1" fill="#000"/><rect x="11" y="7" width="1" height="1" fill="#000"/><rect x="3" y="8" width="3" height="1" fill="#000"/><rect x="9" y="8" width="2" height="1" fill="#000"/><rect x="2" y="9" width="8" height="1" fill="#000"/><rect x="3" y="10" width="5" height="1" fill="#000"/><rect x="4" y="11" width="3" height="1" fill="#000"/></svg>
<div style="position:absolute;left:242px;top:173px;font-size:11px;line-height:13px;color:#000;white-space:pre;letter-spacing:-0.2px;">spider-web</div>
<div style="position:absolute;left:462px;top:173px;font-size:11px;line-height:13px;color:#000;white-space:pre;letter-spacing:-0.2px;">Folder</div>
<svg style="position:absolute;left:225px;top:186px" width="16" height="16" viewBox="0 0 16 16" shape-rendering="crispEdges"><rect x="2" y="2" width="6" height="1" fill="#808040"/><rect x="1" y="3" width="1" height="1" fill="#808060"/><rect x="8" y="3" width="1" height="1" fill="#808060"/><rect x="0" y="4" width="1" height="10" fill="#808080"/><rect x="9" y="4" width="5" height="1" fill="#808080"/><rect x="2" y="3" width="6" height="1" fill="#f4f4b0"/><rect x="1" y="4" width="8" height="1" fill="#f4f4b0"/><rect x="1" y="5" width="13" height="9" fill="url(#dy)"/><rect x="14" y="4" width="1" height="11" fill="#000"/><rect x="1" y="14" width="14" height="1" fill="#000"/><rect x="4" y="7" width="1" height="1" fill="#000"/><rect x="11" y="7" width="1" height="1" fill="#000"/><rect x="3" y="8" width="3" height="1" fill="#000"/><rect x="9" y="8" width="2" height="1" fill="#000"/><rect x="2" y="9" width="8" height="1" fill="#000"/><rect x="3" y="10" width="5" height="1" fill="#000"/><rect x="4" y="11" width="3" height="1" fill="#000"/></svg>
<div style="position:absolute;left:242px;top:190px;font-size:11px;line-height:13px;color:#000;white-space:pre;letter-spacing:-0.2px;">sgml</div>
<div style="position:absolute;left:462px;top:190px;font-size:11px;line-height:13px;color:#000;white-space:pre;letter-spacing:-0.2px;">Folder</div>
<svg style="position:absolute;left:225px;top:203px" width="16" height="16" viewBox="0 0 16 16" shape-rendering="crispEdges"><rect x="2" y="2" width="6" height="1" fill="#808040"/><rect x="1" y="3" width="1" height="1" fill="#808060"/><rect x="8" y="3" width="1" height="1" fill="#808060"/><rect x="0" y="4" width="1" height="10" fill="#808080"/><rect x="9" y="4" width="5" height="1" fill="#808080"/><rect x="2" y="3" width="6" height="1" fill="#f4f4b0"/><rect x="1" y="4" width="8" height="1" fill="#f4f4b0"/><rect x="1" y="5" width="13" height="9" fill="url(#dy)"/><rect x="14" y="4" width="1" height="11" fill="#000"/><rect x="1" y="14" width="14" height="1" fill="#000"/></svg>
<div style="position:absolute;left:242px;top:207px;font-size:11px;line-height:13px;color:#000;white-space:pre;letter-spacing:-0.2px;">seagate</div>
<div style="position:absolute;left:462px;top:207px;font-size:11px;line-height:13px;color:#000;white-space:pre;letter-spacing:-0.2px;">NonCvs Folder</div>
<svg style="position:absolute;left:225px;top:220px" width="16" height="16" viewBox="0 0 16 16" shape-rendering="crispEdges"><rect x="2" y="2" width="6" height="1" fill="#808040"/><rect x="1" y="3" width="1" height="1" fill="#808060"/><rect x="8" y="3" width="1" height="1" fill="#808060"/><rect x="0" y="4" width="1" height="10" fill="#808080"/><rect x="9" y="4" width="5" height="1" fill="#808080"/><rect x="2" y="3" width="6" height="1" fill="#f4f4b0"/><rect x="1" y="4" width="8" height="1" fill="#f4f4b0"/><rect x="1" y="5" width="13" height="9" fill="url(#dy)"/><rect x="14" y="4" width="1" height="11" fill="#000"/><rect x="1" y="14" width="14" height="1" fill="#000"/><rect x="4" y="7" width="1" height="1" fill="#000"/><rect x="11" y="7" width="1" height="1" fill="#000"/><rect x="3" y="8" width="3" height="1" fill="#000"/><rect x="9" y="8" width="2" height="1" fill="#000"/><rect x="2" y="9" width="8" height="1" fill="#000"/><rect x="3" y="10" width="5" height="1" fill="#000"/><rect x="4" y="11" width="3" height="1" fill="#000"/></svg>
<div style="position:absolute;left:242px;top:224px;font-size:11px;line-height:13px;color:#000;white-space:pre;letter-spacing:-0.2px;">scripts</div>
<div style="position:absolute;left:462px;top:224px;font-size:11px;line-height:13px;color:#000;white-space:pre;letter-spacing:-0.2px;">Folder</div>
<svg style="position:absolute;left:225px;top:237px" width="16" height="16" viewBox="0 0 16 16" shape-rendering="crispEdges"><rect x="2" y="2" width="6" height="1" fill="#808040"/><rect x="1" y="3" width="1" height="1" fill="#808060"/><rect x="8" y="3" width="1" height="1" fill="#808060"/><rect x="0" y="4" width="1" height="10" fill="#808080"/><rect x="9" y="4" width="5" height="1" fill="#808080"/><rect x="2" y="3" width="6" height="1" fill="#f4f4b0"/><rect x="1" y="4" width="8" height="1" fill="#f4f4b0"/><rect x="1" y="5" width="13" height="9" fill="url(#dy)"/><rect x="14" y="4" width="1" height="11" fill="#000"/><rect x="1" y="14" width="14" height="1" fill="#000"/><path d="M3 4 L6 4 L5 8 L7 9 L4 13 L5 9 L3 8 Z" fill="#fff" stroke="#808080" stroke-width="0.7" shape-rendering="geometricPrecision"/></svg>
<div style="position:absolute;left:242px;top:241px;font-size:11px;line-height:13px;color:#000;white-space:pre;letter-spacing:-0.2px;">qt</div>
<div style="position:absolute;left:462px;top:241px;font-size:11px;line-height:13px;color:#000;white-space:pre;letter-spacing:-0.2px;">Missing</div>
<svg style="position:absolute;left:225px;top:254px" width="16" height="16" viewBox="0 0 16 16" shape-rendering="crispEdges"><rect x="2" y="2" width="6" height="1" fill="#808040"/><rect x="1" y="3" width="1" height="1" fill="#808060"/><rect x="8" y="3" width="1" height="1" fill="#808060"/><rect x="0" y="4" width="1" height="10" fill="#808080"/><rect x="9" y="4" width="5" height="1" fill="#808080"/><rect x="2" y="3" width="6" height="1" fill="#f4f4b0"/><rect x="1" y="4" width="8" height="1" fill="#f4f4b0"/><rect x="1" y="5" width="13" height="9" fill="url(#dy)"/><rect x="14" y="4" width="1" height="11" fill="#000"/><rect x="1" y="14" width="14" height="1" fill="#000"/><rect x="4" y="7" width="1" height="1" fill="#000"/><rect x="11" y="7" width="1" height="1" fill="#000"/><rect x="3" y="8" width="3" height="1" fill="#000"/><rect x="9" y="8" width="2" height="1" fill="#000"/><rect x="2" y="9" width="8" height="1" fill="#000"/><rect x="3" y="10" width="5" height="1" fill="#000"/><rect x="4" y="11" width="3" height="1" fill="#000"/></svg>
<div style="position:absolute;left:242px;top:258px;font-size:11px;line-height:13px;color:#000;white-space:pre;letter-spacing:-0.2px;">perl</div>
<div style="position:absolute;left:462px;top:258px;font-size:11px;line-height:13px;color:#000;white-space:pre;letter-spacing:-0.2px;">Folder</div>
<svg style="position:absolute;left:225px;top:271px" width="16" height="16" viewBox="0 0 16 16" shape-rendering="crispEdges"><rect x="2" y="2" width="6" height="1" fill="#808040"/><rect x="1" y="3" width="1" height="1" fill="#808060"/><rect x="8" y="3" width="1" height="1" fill="#808060"/><rect x="0" y="4" width="1" height="10" fill="#808080"/><rect x="9" y="4" width="5" height="1" fill="#808080"/><rect x="2" y="3" width="6" height="1" fill="#f4f4b0"/><rect x="1" y="4" width="8" height="1" fill="#f4f4b0"/><rect x="1" y="5" width="13" height="9" fill="url(#dy)"/><rect x="14" y="4" width="1" height="11" fill="#000"/><rect x="1" y="14" width="14" height="1" fill="#000"/></svg>
<div style="position:absolute;left:242px;top:275px;font-size:11px;line-height:13px;color:#000;white-space:pre;letter-spacing:-0.2px;">packclus</div>
<div style="position:absolute;left:462px;top:275px;font-size:11px;line-height:13px;color:#000;white-space:pre;letter-spacing:-0.2px;">NonCvs Folder</div>
<svg style="position:absolute;left:225px;top:288px" width="16" height="16" viewBox="0 0 16 16" shape-rendering="crispEdges"><rect x="2" y="2" width="6" height="1" fill="#808040"/><rect x="1" y="3" width="1" height="1" fill="#808060"/><rect x="8" y="3" width="1" height="1" fill="#808060"/><rect x="0" y="4" width="1" height="10" fill="#808080"/><rect x="9" y="4" width="5" height="1" fill="#808080"/><rect x="2" y="3" width="6" height="1" fill="#f4f4b0"/><rect x="1" y="4" width="8" height="1" fill="#f4f4b0"/><rect x="1" y="5" width="13" height="9" fill="url(#dy)"/><rect x="14" y="4" width="1" height="11" fill="#000"/><rect x="1" y="14" width="14" height="1" fill="#000"/><rect x="4" y="7" width="1" height="1" fill="#000"/><rect x="11" y="7" width="1" height="1" fill="#000"/><rect x="3" y="8" width="3" height="1" fill="#000"/><rect x="9" y="8" width="2" height="1" fill="#000"/><rect x="2" y="9" width="8" height="1" fill="#000"/><rect x="3" y="10" width="5" height="1" fill="#000"/><rect x="4" y="11" width="3" height="1" fill="#000"/></svg>
<div style="position:absolute;left:242px;top:292px;font-size:11px;line-height:13px;color:#000;white-space:pre;letter-spacing:-0.2px;">msg</div>
<div style="position:absolute;left:462px;top:292px;font-size:11px;line-height:13px;color:#000;white-space:pre;letter-spacing:-0.2px;">Folder</div>
<svg style="position:absolute;left:225px;top:305px" width="16" height="16" viewBox="0 0 16 16" shape-rendering="crispEdges"><rect x="2" y="2" width="6" height="1" fill="#808040"/><rect x="1" y="3" width="1" height="1" fill="#808060"/><rect x="8" y="3" width="1" height="1" fill="#808060"/><rect x="0" y="4" width="1" height="10" fill="#808080"/><rect x="9" y="4" width="5" height="1" fill="#808080"/><rect x="2" y="3" width="6" height="1" fill="#f4f4b0"/><rect x="1" y="4" width="8" height="1" fill="#f4f4b0"/><rect x="1" y="5" width="13" height="9" fill="url(#dy)"/><rect x="14" y="4" width="1" height="11" fill="#000"/><rect x="1" y="14" width="14" height="1" fill="#000"/></svg>
<div style="position:absolute;left:242px;top:309px;font-size:11px;line-height:13px;color:#000;white-space:pre;letter-spacing:-0.2px;">log</div>
<div style="position:absolute;left:462px;top:309px;font-size:11px;line-height:13px;color:#000;white-space:pre;letter-spacing:-0.2px;">NonCvs Folder</div>
</div></div>
<div style="position:absolute;left:746px;top:116px;width:16px;height:206px;background:repeating-conic-gradient(#fff 0 25%,#c0c0c0 0 50%) 0 0/2px 2px;"></div>
<div style="position:absolute;left:746px;top:100px;width:16px;height:16px;background:#000;"></div>
<div style="position:absolute;left:746px;top:100px;width:15px;height:15px;background:#fff;"></div>
<div style="position:absolute;left:747px;top:101px;width:14px;height:14px;background:#808080;"></div>
<div style="position:absolute;left:747px;top:101px;width:13px;height:13px;background:#dfdfdf;"></div>
<div style="position:absolute;left:748px;top:102px;width:12px;height:12px;background:#c0c0c0;"></div>
<svg style="position:absolute;left:750px;top:106px" width="8" height="4"><path d="M0 4 H7 L3.5 0.5 Z" fill="#000"/></svg>
<div style="position:absolute;left:746px;top:116px;width:16px;height:67px;background:#000;"></div>
<div style="position:absolute;left:746px;top:116px;width:15px;height:66px;background:#fff;"></div>
<div style="position:absolute;left:747px;top:117px;width:14px;height:65px;background:#808080;"></div>
<div style="position:absolute;left:747px;top:117px;width:13px;height:64px;background:#dfdfdf;"></div>
<div style="position:absolute;left:748px;top:118px;width:12px;height:63px;background:#c0c0c0;"></div>
<div style="position:absolute;left:746px;top:307px;width:16px;height:16px;background:#000;"></div>
<div style="position:absolute;left:746px;top:307px;width:15px;height:15px;background:#fff;"></div>
<div style="position:absolute;left:747px;top:308px;width:14px;height:14px;background:#808080;"></div>
<div style="position:absolute;left:747px;top:308px;width:13px;height:13px;background:#dfdfdf;"></div>
<div style="position:absolute;left:748px;top:309px;width:12px;height:12px;background:#c0c0c0;"></div>
<svg style="position:absolute;left:750px;top:313px" width="8" height="4"><path d="M0 0 H7 L3.5 3.5 Z" fill="#000"/></svg>
<div style="position:absolute;left:206px;top:323px;width:540px;height:16px;background:repeating-conic-gradient(#fff 0 25%,#c0c0c0 0 50%) 0 0/2px 2px;"></div>
<div style="position:absolute;left:206px;top:323px;width:16px;height:16px;background:#000;"></div>
<div style="position:absolute;left:206px;top:323px;width:15px;height:15px;background:#fff;"></div>
<div style="position:absolute;left:207px;top:324px;width:14px;height:14px;background:#808080;"></div>
<div style="position:absolute;left:207px;top:324px;width:13px;height:13px;background:#dfdfdf;"></div>
<div style="position:absolute;left:208px;top:325px;width:12px;height:12px;background:#c0c0c0;"></div>
<svg style="position:absolute;left:211px;top:327px" width="4" height="8"><path d="M4 0 V7 L0.5 3.5 Z" fill="#000"/></svg>
<div style="position:absolute;left:222px;top:323px;width:343px;height:16px;background:#000;"></div>
<div style="position:absolute;left:222px;top:323px;width:342px;height:15px;background:#fff;"></div>
<div style="position:absolute;left:223px;top:324px;width:341px;height:14px;background:#808080;"></div>
<div style="position:absolute;left:223px;top:324px;width:340px;height:13px;background:#dfdfdf;"></div>
<div style="position:absolute;left:224px;top:325px;width:339px;height:12px;background:#c0c0c0;"></div>
<div style="position:absolute;left:730px;top:323px;width:16px;height:16px;background:#000;"></div>
<div style="position:absolute;left:730px;top:323px;width:15px;height:15px;background:#fff;"></div>
<div style="position:absolute;left:731px;top:324px;width:14px;height:14px;background:#808080;"></div>
<div style="position:absolute;left:731px;top:324px;width:13px;height:13px;background:#dfdfdf;"></div>
<div style="position:absolute;left:732px;top:325px;width:12px;height:12px;background:#c0c0c0;"></div>
<svg style="position:absolute;left:736px;top:327px" width="4" height="8"><path d="M0 0 V7 L3.5 3.5 Z" fill="#000"/></svg>
<div style="position:absolute;left:746px;top:323px;width:16px;height:16px;background:#c0c0c0;"></div>
<div style="position:absolute;left:4px;top:339px;width:200px;height:1px;background:#808080;"></div>
<div style="position:absolute;left:4px;top:340px;width:760px;height:1px;background:#fff;"></div>
<div style="position:absolute;left:4px;top:340px;width:1px;height:4px;background:#fff;"></div>
<div style="position:absolute;left:4px;top:344px;width:760px;height:1px;background:#808080;"></div>
<div style="position:absolute;left:763px;top:340px;width:1px;height:5px;background:#808080;"></div>
<div style="position:absolute;left:6px;top:348px;width:12px;height:12px;background:#000;"></div>
<div style="position:absolute;left:6px;top:348px;width:11px;height:11px;background:#fff;"></div>
<div style="position:absolute;left:7px;top:349px;width:10px;height:10px;background:#808080;"></div>
<div style="position:absolute;left:7px;top:349px;width:9px;height:9px;background:#c0c0c0;"></div>
<div style="position:absolute;left:8px;top:350px;width:8px;height:8px;background:#c0c0c0;"></div>
<svg style="position:absolute;left:9px;top:351px" width="7" height="6"><path d="M0.5 0.5 L6.5 5.5 M6.5 0.5 L0.5 5.5" stroke="#000" stroke-width="1.5"/></svg>
<div style="position:absolute;left:6px;top:362px;width:12px;height:12px;background:#000;"></div>
<div style="position:absolute;left:6px;top:362px;width:11px;height:11px;background:#fff;"></div>
<div style="position:absolute;left:7px;top:363px;width:10px;height:10px;background:#808080;"></div>
<div style="position:absolute;left:7px;top:363px;width:9px;height:9px;background:#c0c0c0;"></div>
<div style="position:absolute;left:8px;top:364px;width:8px;height:8px;background:#c0c0c0;"></div>
<svg style="position:absolute;left:10px;top:364px" width="5" height="8"><path d="M4 0 V7 L0.5 3.5 Z" fill="#808080"/></svg>
<div style="position:absolute;left:8px;top:377px;width:1px;height:239px;background:#fff;"></div>
<div style="position:absolute;left:9px;top:377px;width:1px;height:239px;background:#808080;"></div>
<div style="position:absolute;left:10px;top:377px;width:1px;height:239px;background:#a8a8a8;"></div>
<div style="position:absolute;left:12px;top:377px;width:1px;height:239px;background:#fff;"></div>
<div style="position:absolute;left:13px;top:377px;width:1px;height:239px;background:#808080;"></div>
<div style="position:absolute;left:14px;top:377px;width:1px;height:239px;background:#a8a8a8;"></div>
<div style="position:absolute;left:23px;top:351px;width:736px;height:264px;background:#fff;"></div>
<div style="position:absolute;left:23px;top:351px;width:735px;height:263px;background:#808080;"></div>
<div style="position:absolute;left:24px;top:352px;width:734px;height:262px;background:#dfdfdf;"></div>
<div style="position:absolute;left:24px;top:352px;width:733px;height:261px;background:#000;"></div>
<div style="position:absolute;left:25px;top:353px;width:732px;height:260px;background:#fff;"></div>
<div style="position:absolute;left:34px;top:357px;font-family:'Liberation Mono',monospace;font-size:13.33px;line-height:16px;white-space:pre;color:#000;">CVSROOT: anonymous@cvs.dxspider.sourceforge.net:/cvsroot/dxspider login (password
authentication)
<span style="color:#d07a22">TCL is *not* available, shell is disabled</span></div>
<div style="position:absolute;left:4px;top:621px;width:760px;height:1px;background:#808080;"></div>
<div style="position:absolute;left:4px;top:622px;width:760px;height:1px;background:#fff;"></div>
<div style="position:absolute;left:5px;top:627px;font-size:11px;line-height:13px;color:#000;white-space:pre;letter-spacing:-0.2px;">For Help, press F1</div>
<div style="position:absolute;left:542px;top:625px;width:105px;height:16px;background:#fff;"></div>
<div style="position:absolute;left:542px;top:625px;width:104px;height:15px;background:#808080;"></div>
<div style="position:absolute;left:543px;top:626px;width:103px;height:14px;background:#c0c0c0;"></div>
<div style="position:absolute;left:649px;top:625px;width:28px;height:16px;background:#fff;"></div>
<div style="position:absolute;left:649px;top:625px;width:27px;height:15px;background:#808080;"></div>
<div style="position:absolute;left:650px;top:626px;width:26px;height:14px;background:#c0c0c0;"></div>
<div style="position:absolute;left:679px;top:625px;width:30px;height:16px;background:#fff;"></div>
<div style="position:absolute;left:679px;top:625px;width:29px;height:15px;background:#808080;"></div>
<div style="position:absolute;left:680px;top:626px;width:28px;height:14px;background:#c0c0c0;"></div>
<div style="position:absolute;left:712px;top:625px;width:34px;height:16px;background:#fff;"></div>
<div style="position:absolute;left:712px;top:625px;width:33px;height:15px;background:#808080;"></div>
<div style="position:absolute;left:713px;top:626px;width:32px;height:14px;background:#c0c0c0;"></div>
<svg style="position:absolute;left:750px;top:628px" width="13" height="13"><path d="M12 1 L1 12 M12 5 L5 12 M12 9 L9 12" stroke="#fff" stroke-width="1"/><path d="M12.5 2 L2 12.5 M12.5 6 L6 12.5 M12.5 10 L10 12.5" stroke="#808080" stroke-width="1.4"/></svg>
</body></html>
